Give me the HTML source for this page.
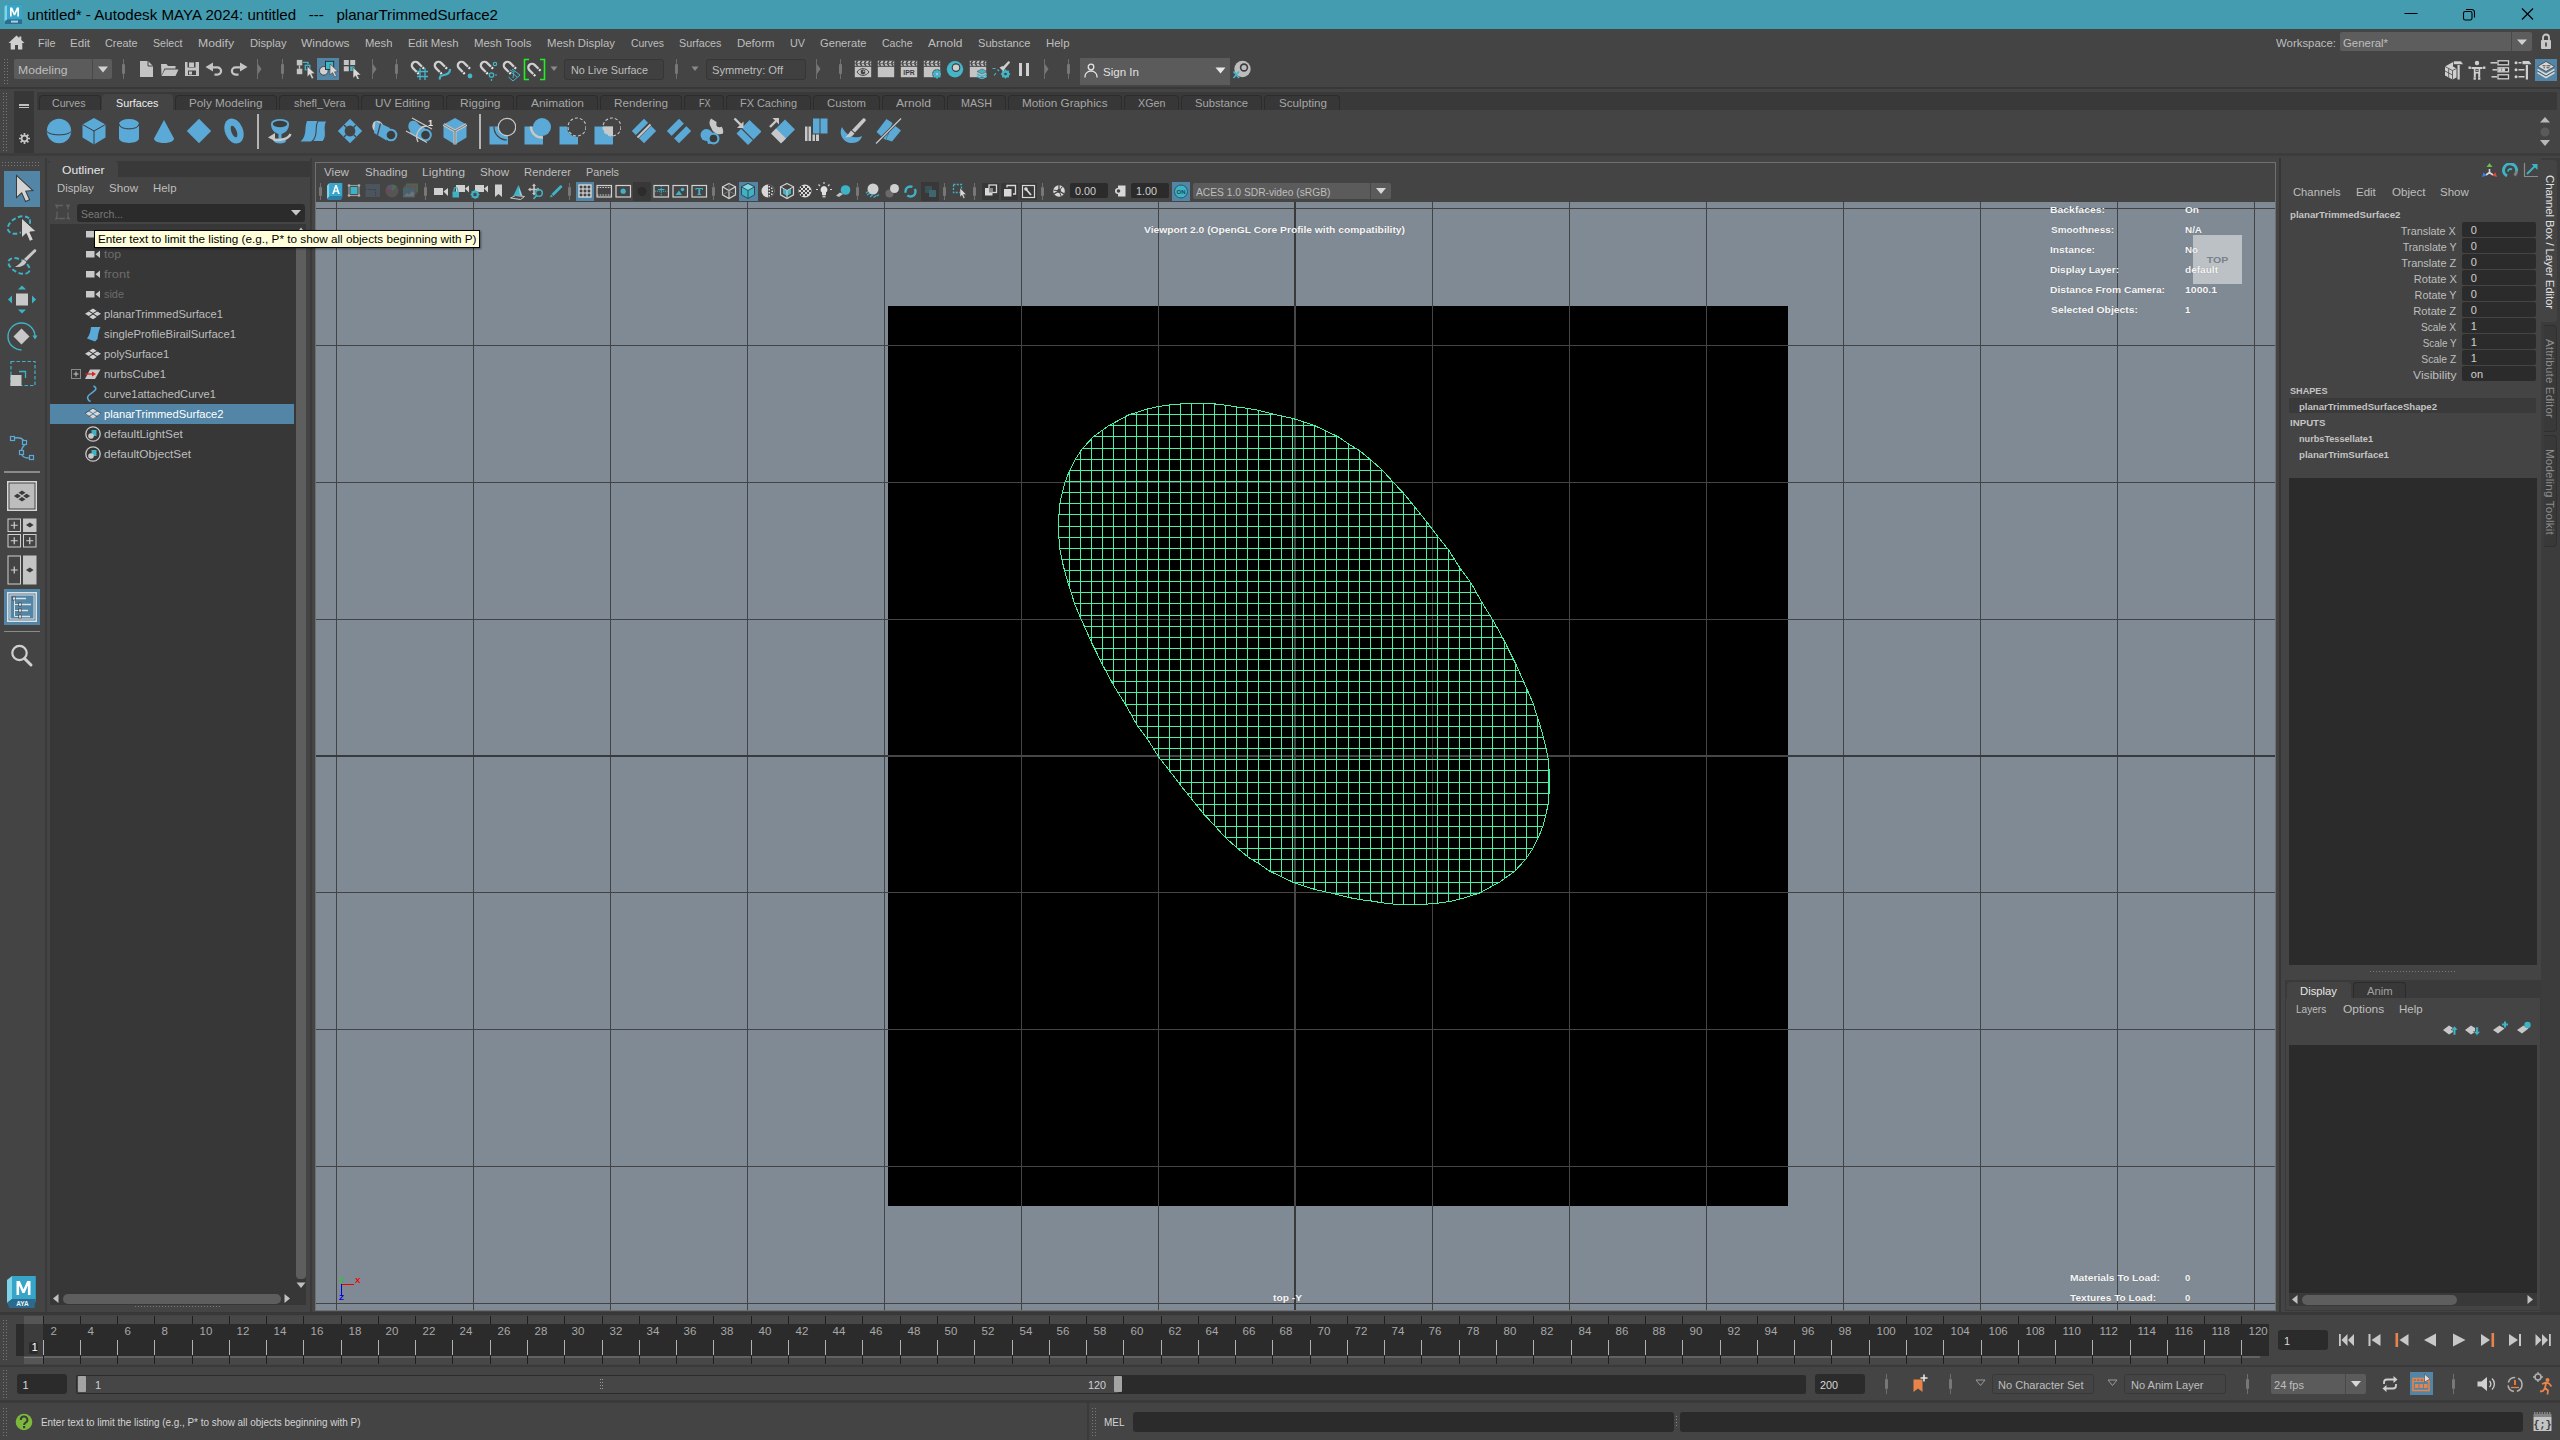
<!DOCTYPE html>
<html><head><meta charset="utf-8"><title>Maya</title>
<style>
html,body{margin:0;padding:0;}
body{width:2560px;height:1440px;background:#444444;overflow:hidden;position:relative;font-family:"Liberation Sans",sans-serif;}
div,svg{position:absolute;box-sizing:border-box;}
.t{white-space:pre;}
</style></head><body>
<div style="left:0px;top:0px;width:2560px;height:29px;background:#449cb1;"></div>
<svg style="left:4px;top:4px;" width="20" height="21" viewBox="0 0 20 21"><path d="M2 2 L5 0.5 L18 0.5 L18 17 L15.5 20 L2 20 Z" fill="#2f7fa8"/>
<path d="M0.5 2.5 L3.5 0.5 L3.5 15.5 L0.5 17.5Z" fill="#7fd3e8"/>
<rect x="3" y="0.5" width="15" height="15" fill="#37a5c8"/>
<path d="M3.5 15.5 L18 15.5 L18 20 L1 20 L1 17 Z" fill="#2a6d92"/>
<path d="M6 12.5V3.5h2.2l2.3 5.2 2.3-5.2H15v9h-1.7V6.6l-2.1 4.7h-1.4L7.7 6.6v5.9z" fill="#fff"/>
<rect x="7" y="16.6" width="7" height="2" fill="#cfe6ee" opacity=".8"/></svg>
<div class="t" style="left:27.00px;top:7.30px;font-size:15px;line-height:15px;color:#000;transform:scaleX(1.0076);transform-origin:0 0;">untitled* - Autodesk MAYA 2024: untitled   ---   planarTrimmedSurface2</div>
<svg style="left:2400px;top:4px;" width="150" height="22" viewBox="0 0 150 22"><path d="M4.5 9.5H17.5" stroke="#000" stroke-width="1" fill="none"/>
<g transform="translate(-1 0)"><rect x="64.500" y="7.500" width="8.500" height="8.500" rx="1.800" fill="none" stroke="#000" stroke-width="1.100"/><path d="M67 5.500H72.500a3 3 0 0 1 3 3V13.500" fill="none" stroke="#000" stroke-width="1.100"/></g>
<path d="M122 4.500L133 15.500M133 4.500L122 15.500" stroke="#000" stroke-width="1.2" fill="none"/></svg>
<svg style="left:8px;top:35px;" width="17" height="15" viewBox="0 0 17 15"><path d="M8.500 0.500L0.500 8h2.200v6.500h4.300v-4.500h3v4.500h4.300V8h2.200L13.300 4.900V1.500h-2v1.500z" fill="#d0d0d0"/></svg>
<div class="t" style="left:37.50px;top:37.99px;font-size:11px;line-height:11px;color:#bebebe;transform:scaleX(0.9874);transform-origin:0 0;">File</div>
<div class="t" style="left:70.00px;top:37.99px;font-size:11px;line-height:11px;color:#bebebe;transform:scaleX(1.0551);transform-origin:0 0;">Edit</div>
<div class="t" style="left:105.00px;top:37.99px;font-size:11px;line-height:11px;color:#bebebe;transform:scaleX(0.9844);transform-origin:0 0;">Create</div>
<div class="t" style="left:153.00px;top:37.99px;font-size:11px;line-height:11px;color:#bebebe;transform:scaleX(0.9649);transform-origin:0 0;">Select</div>
<div class="t" style="left:198.00px;top:37.99px;font-size:11px;line-height:11px;color:#bebebe;transform:scaleX(1.1112);transform-origin:0 0;">Modify</div>
<div class="t" style="left:249.50px;top:37.99px;font-size:11px;line-height:11px;color:#bebebe;transform:scaleX(1.0121);transform-origin:0 0;">Display</div>
<div class="t" style="left:301.00px;top:37.99px;font-size:11px;line-height:11px;color:#bebebe;transform:scaleX(1.0869);transform-origin:0 0;">Windows</div>
<div class="t" style="left:365.00px;top:37.99px;font-size:11px;line-height:11px;color:#bebebe;transform:scaleX(1.0224);transform-origin:0 0;">Mesh</div>
<div class="t" style="left:408.00px;top:37.99px;font-size:11px;line-height:11px;color:#bebebe;transform:scaleX(1.0325);transform-origin:0 0;">Edit Mesh</div>
<div class="t" style="left:474.00px;top:37.99px;font-size:11px;line-height:11px;color:#bebebe;transform:scaleX(1.0373);transform-origin:0 0;">Mesh Tools</div>
<div class="t" style="left:547.00px;top:37.99px;font-size:11px;line-height:11px;color:#bebebe;transform:scaleX(1.0300);transform-origin:0 0;">Mesh Display</div>
<div class="t" style="left:630.50px;top:37.99px;font-size:11px;line-height:11px;color:#bebebe;transform:scaleX(0.9471);transform-origin:0 0;">Curves</div>
<div class="t" style="left:679.00px;top:37.99px;font-size:11px;line-height:11px;color:#bebebe;transform:scaleX(0.9790);transform-origin:0 0;">Surfaces</div>
<div class="t" style="left:737.00px;top:37.99px;font-size:11px;line-height:11px;color:#bebebe;transform:scaleX(1.0399);transform-origin:0 0;">Deform</div>
<div class="t" style="left:790.00px;top:37.99px;font-size:11px;line-height:11px;color:#bebebe;transform:scaleX(0.9816);transform-origin:0 0;">UV</div>
<div class="t" style="left:820.00px;top:37.99px;font-size:11px;line-height:11px;color:#bebebe;transform:scaleX(1.0139);transform-origin:0 0;">Generate</div>
<div class="t" style="left:882.00px;top:37.99px;font-size:11px;line-height:11px;color:#bebebe;transform:scaleX(0.9593);transform-origin:0 0;">Cache</div>
<div class="t" style="left:928.00px;top:37.99px;font-size:11px;line-height:11px;color:#bebebe;transform:scaleX(1.0850);transform-origin:0 0;">Arnold</div>
<div class="t" style="left:978.00px;top:37.99px;font-size:11px;line-height:11px;color:#bebebe;transform:scaleX(1.0100);transform-origin:0 0;">Substance</div>
<div class="t" style="left:1046.00px;top:37.99px;font-size:11px;line-height:11px;color:#bebebe;transform:scaleX(1.0389);transform-origin:0 0;">Help</div>
<div class="t" style="left:2276.00px;top:37.99px;font-size:11px;line-height:11px;color:#bebebe;transform:scaleX(1.0368);transform-origin:0 0;">Workspace:</div>
<div style="left:2340px;top:32px;width:192px;height:19px;background:#5d5d5d;border-radius:2px;"></div>
<div style="left:2511px;top:32px;width:1px;height:19px;background:#4a4a4a;"></div>
<div class="t" style="left:2343.00px;top:37.99px;font-size:11px;line-height:11px;color:#bebebe;transform:scaleX(1.0365);transform-origin:0 0;">General*</div>
<svg style="left:2516px;top:38px;" width="12" height="8" viewBox="0 0 12 8"><path d="M1 1.500h10L6 7z" fill="#d0d0d0"/></svg>
<svg style="left:2540px;top:33px;" width="12" height="17" viewBox="0 0 12 17"><path d="M3 7V4.500a3 3 0 0 1 6 0V7" fill="none" stroke="#c8c8c8" stroke-width="1.800"/><rect x="1" y="7" width="10" height="9" rx="1" fill="#c8c8c8"/><rect x="5.200" y="9.500" width="1.600" height="4" fill="#444"/></svg>
<div style="left:0px;top:87px;width:2560px;height:2px;background:#383838;"></div>
<svg style="left:4px;top:59px;" width="5" height="25" viewBox="0 0 5 25"><rect x="0" y="0" width="1" height="1" fill="#777"/><rect x="3" y="0" width="1" height="1" fill="#777"/><rect x="0" y="3" width="1" height="1" fill="#777"/><rect x="3" y="3" width="1" height="1" fill="#777"/><rect x="0" y="6" width="1" height="1" fill="#777"/><rect x="3" y="6" width="1" height="1" fill="#777"/><rect x="0" y="9" width="1" height="1" fill="#777"/><rect x="3" y="9" width="1" height="1" fill="#777"/><rect x="0" y="12" width="1" height="1" fill="#777"/><rect x="3" y="12" width="1" height="1" fill="#777"/><rect x="0" y="15" width="1" height="1" fill="#777"/><rect x="3" y="15" width="1" height="1" fill="#777"/><rect x="0" y="18" width="1" height="1" fill="#777"/><rect x="3" y="18" width="1" height="1" fill="#777"/><rect x="0" y="21" width="1" height="1" fill="#777"/><rect x="3" y="21" width="1" height="1" fill="#777"/><rect x="0" y="24" width="1" height="1" fill="#777"/><rect x="3" y="24" width="1" height="1" fill="#777"/></svg>
<div style="left:14px;top:59px;width:98px;height:20px;background:#5b5b5b;border-radius:2px;"></div>
<div style="left:92px;top:59px;width:1px;height:20px;background:#484848;"></div>
<div class="t" style="left:17.50px;top:64.57px;font-size:11.5px;line-height:11.5px;color:#bebebe;transform:scaleX(1.0606);transform-origin:0 0;">Modeling</div>
<svg style="left:97px;top:65px;" width="12" height="9" viewBox="0 0 12 9"><path d="M1 1.500h10L6 7.500z" fill="#d0d0d0"/></svg>
<div style="left:123px;top:59px;width:1px;height:20px;background:#6e6e6e;"></div>
<div style="left:122px;top:64px;width:3px;height:10px;background:#777;border-radius:1px;"></div>
<svg style="left:257px;top:59px;" width="6" height="20" viewBox="0 0 6 20"><path d="M0.500 0V20" stroke="#6e6e6e" fill="none"/><path d="M1 5 L4.500 10 L1 15z" fill="#777"/></svg>
<div style="left:282px;top:59px;width:1px;height:20px;background:#6e6e6e;"></div>
<div style="left:281px;top:64px;width:3px;height:10px;background:#777;border-radius:1px;"></div>
<svg style="left:372px;top:59px;" width="6" height="20" viewBox="0 0 6 20"><path d="M0.500 0V20" stroke="#6e6e6e" fill="none"/><path d="M1 5 L4.500 10 L1 15z" fill="#777"/></svg>
<div style="left:396px;top:59px;width:1px;height:20px;background:#6e6e6e;"></div>
<div style="left:395px;top:64px;width:3px;height:10px;background:#777;border-radius:1px;"></div>
<svg style="left:139px;top:60px;" width="15" height="18" viewBox="0 0 15 18"><path d="M1 1h8l5 5v11H1z" fill="#c4c4c4"/><path d="M9 1v5h5" fill="none" stroke="#444" stroke-width="1"/></svg>
<svg style="left:160px;top:62px;" width="19" height="15" viewBox="0 0 19 15"><path d="M1 2h5.500l1.500 2h7.500v2.500H4.500L1.500 13.500z" fill="#c4c4c4"/><path d="M5 7.500h13.500l-3 6.500H1.500z" fill="#c4c4c4"/></svg>
<svg style="left:184px;top:61px;" width="16" height="16" viewBox="0 0 16 16"><path d="M1 1h14v14H1z" fill="#c4c4c4"/><rect x="3.500" y="1" width="8" height="5.500" fill="#444"/><rect x="5" y="1.500" width="5" height="4.500" fill="#c4c4c4"/><rect x="4" y="9.500" width="8" height="4.500" fill="#444"/><rect x="5" y="10.500" width="3" height="3" fill="#c4c4c4"/></svg>
<svg style="left:205px;top:62px;" width="19" height="14" viewBox="0 0 19 14"><path d="M8 0.500L0.500 5L8 9.500V6.500h4.500a2.500 2.500 0 0 1 0 5H9.500v2.200h3a4.700 4.700 0 0 0 0-9.400H8z" fill="#c4c4c4"/></svg>
<svg style="left:229px;top:62px;" width="19" height="14" viewBox="0 0 19 14"><path d="M11 0.500L18.500 5L11 9.500V6.500H6.500a2.500 2.500 0 0 0 0 5H9.500v2.200h-3a4.700 4.700 0 0 1 0-9.400H11z" fill="#c4c4c4"/></svg>
<svg style="left:295px;top:59px;" width="20" height="20" viewBox="0 0 20 20"><rect x="1.800" y=".9" width="5.500" height="5.500" fill="#c4c4c4"/><rect x="1.800" y="9.700" width="5.500" height="5.500" fill="#c4c4c4"/><path d="M4.500 6.400v3.300" stroke="#c4c4c4" stroke-width="1.400"/><path d="M8 3.400h5v1.800" stroke="#45b5c9" fill="none" stroke-width="1.300"/><rect x="10.300" y="6.300" width="4.500" height="4.500" fill="none" stroke="#45b5c9" stroke-width="1.300"/><path d="M12.2 7l0 11 2.600-2.400 2 4.400 1.900-.9-2-4.300 3.500-.2z" fill="#d8d8d8" stroke="#444" stroke-width=".6"/></svg>
<div style="left:317px;top:58px;width:22px;height:22px;background:#5285a6;"></div>
<svg style="left:318px;top:59px;" width="20" height="20" viewBox="0 0 20 20"><circle cx="5.800" cy="11.800" r="4.300" fill="#d0d0d0" stroke="#333" stroke-width=".8"/><rect x="7.500" y="2.300" width="8.200" height="8.200" fill="#3cb6c9" stroke="#2a2a2a" stroke-width=".9"/><path d="M12 5l0 11 2.600-2.400 2 4.400 1.900-.9-2-4.300 3.500-.2z" fill="#d8d8d8" stroke="#444" stroke-width=".6"/></svg>
<svg style="left:342px;top:59px;" width="20" height="20" viewBox="0 0 20 20"><rect x="1.800" y="1" width="5" height="5" fill="#c4c4c4"/><rect x="8.200" y="1" width="5" height="5" fill="#c4c4c4"/><rect x="1.800" y="7.300" width="5" height="5" fill="#c4c4c4"/><rect x="8.200" y="7.300" width="4.300" height="4.700" fill="#45b5c9"/><path d="M11 8.3l0 11 2.600-2.400 2 4.400 1.900-.9-2-4.300 3.500-.2z" fill="#d8d8d8" stroke="#444" stroke-width=".6"/></svg>
<svg style="left:410px;top:60px;" width="22" height="22" viewBox="0 0 22 22"><g transform="translate(5.500 5.500) rotate(-45)"><path d="M-3.700 5.500V0A3.700 3.700 0 0 1 3.700 0V5.500" fill="none" stroke="#cfcfcf" stroke-width="2.300"/><rect x="-4.850" y="6.400" width="2.300" height="1.900" fill="#e8e8e8"/><rect x="2.550" y="6.400" width="2.300" height="1.900" fill="#e8e8e8"/></g><path d="M7 11.500h11M7 16.500h11M10 8v12M15 8v12" stroke="#45b5c9" stroke-width="1.300" fill="none"/></svg>
<svg style="left:433px;top:60px;" width="22" height="22" viewBox="0 0 22 22"><g transform="translate(5.500 5.500) rotate(-45)"><path d="M-3.700 5.500V0A3.700 3.700 0 0 1 3.700 0V5.500" fill="none" stroke="#cfcfcf" stroke-width="2.300"/><rect x="-4.850" y="6.400" width="2.300" height="1.900" fill="#e8e8e8"/><rect x="2.550" y="6.400" width="2.300" height="1.900" fill="#e8e8e8"/></g><path d="M7 19.500c-1-3 1-4 4-4.500 4-.5 6-2 6-6" stroke="#45b5c9" stroke-width="2.200" fill="none"/></svg>
<svg style="left:456px;top:60px;" width="22" height="22" viewBox="0 0 22 22"><g transform="translate(5.500 5.500) rotate(-45)"><path d="M-3.700 5.500V0A3.700 3.700 0 0 1 3.700 0V5.500" fill="none" stroke="#cfcfcf" stroke-width="2.300"/><rect x="-4.850" y="6.400" width="2.300" height="1.900" fill="#e8e8e8"/><rect x="2.550" y="6.400" width="2.300" height="1.900" fill="#e8e8e8"/></g><circle cx="14" cy="16" r="2.400" fill="#45b5c9"/></svg>
<svg style="left:479px;top:60px;" width="22" height="22" viewBox="0 0 22 22"><g transform="translate(5.500 5.500) rotate(-45)"><path d="M-3.700 5.500V0A3.700 3.700 0 0 1 3.700 0V5.500" fill="none" stroke="#cfcfcf" stroke-width="2.300"/><rect x="-4.850" y="6.400" width="2.300" height="1.900" fill="#e8e8e8"/><rect x="2.550" y="6.400" width="2.300" height="1.900" fill="#e8e8e8"/></g><circle cx="12.500" cy="15" r="2.200" fill="none" stroke="#45b5c9" stroke-width="1.300"/><circle cx="16" cy="4" r="1.700" fill="none" stroke="#45b5c9" stroke-width="1.200"/><path d="M16 15h2M12.500 19v2" stroke="#45b5c9" stroke-width="1.200"/></svg>
<svg style="left:502px;top:60px;" width="22" height="22" viewBox="0 0 22 22"><g transform="translate(5.500 5.500) rotate(-45)"><path d="M-3.700 5.500V0A3.700 3.700 0 0 1 3.700 0V5.500" fill="none" stroke="#cfcfcf" stroke-width="2.300"/><rect x="-4.850" y="6.400" width="2.300" height="1.900" fill="#e8e8e8"/><rect x="2.550" y="6.400" width="2.300" height="1.900" fill="#e8e8e8"/></g><path d="M10 9l8 6-7 6-4.500-4" fill="none" stroke="#45b5c9" stroke-width="1"/><path d="M9 12l6 5M12 11l-1 7M8 10l3 1.500" stroke="#45b5c9" stroke-width="1"/></svg>
<svg style="left:523px;top:58px;" width="23" height="23" viewBox="0 0 23 23"><path d="M6 1.500H1.500v20H6M17 1.500h4.500v20H17" fill="none" stroke="#22ee22" stroke-width="1.600"/><g transform="translate(3.500,4)"><g transform="translate(5.500 5.500) rotate(-45)"><path d="M-3.700 5.500V0A3.700 3.700 0 0 1 3.700 0V5.500" fill="none" stroke="#cfcfcf" stroke-width="2.300"/><rect x="-4.850" y="6.400" width="2.300" height="1.900" fill="#e8e8e8"/><rect x="2.550" y="6.400" width="2.300" height="1.900" fill="#e8e8e8"/></g></g></svg>
<svg style="left:550px;top:66px;" width="8" height="6" viewBox="0 0 8 6"><path d="M0.500 0.500h7l-3.500 4.500z" fill="#8a8a8a"/></svg>
<div style="left:564px;top:59px;width:100px;height:21px;background:#404040;border:1px solid #363636;border-radius:3px;"></div>
<div class="t" style="left:571.00px;top:64.99px;font-size:11px;line-height:11px;color:#bebebe;transform:scaleX(0.9839);transform-origin:0 0;">No Live Surface</div>
<div style="left:676px;top:59px;width:1px;height:20px;background:#6e6e6e;"></div>
<div style="left:675px;top:64px;width:3px;height:10px;background:#777;border-radius:1px;"></div>
<svg style="left:691px;top:66px;" width="8" height="6" viewBox="0 0 8 6"><path d="M0.500 0.500h7l-3.500 4.500z" fill="#8a8a8a"/></svg>
<div style="left:706px;top:59px;width:100px;height:21px;background:#404040;border:1px solid #363636;border-radius:3px;"></div>
<div class="t" style="left:712.00px;top:64.99px;font-size:11px;line-height:11px;color:#bebebe;transform:scaleX(1.0130);transform-origin:0 0;">Symmetry: Off</div>
<svg style="left:816px;top:59px;" width="6" height="20" viewBox="0 0 6 20"><path d="M0.500 0V20" stroke="#6e6e6e" fill="none"/><path d="M1 5 L4.500 10 L1 15z" fill="#777"/></svg>
<div style="left:840px;top:59px;width:1px;height:20px;background:#6e6e6e;"></div>
<div style="left:839px;top:64px;width:3px;height:10px;background:#777;border-radius:1px;"></div>
<svg style="left:853px;top:60px;" width="19" height="19" viewBox="0 0 19 19"><rect x="1.800" y="6.800" width="16.400" height="10.400" fill="#c4c4c4"/><rect x="1.800" y=".8" width="16.400" height="2.200" fill="#c4c4c4"/><rect x="1.800" y="3.600" width="16.400" height="2.200" fill="#c4c4c4"/><path d="M4.7 .8l-1.800 2.200M2.9 3.600l1.800 2.200" stroke="#444" stroke-width="1.500"/><path d="M8.9 .8l-1.800 2.200M7.1 3.600l1.800 2.200" stroke="#444" stroke-width="1.500"/><path d="M13.1 .8l-1.800 2.200M11.3 3.600l1.800 2.200" stroke="#444" stroke-width="1.500"/><path d="M17.3 .8l-1.800 2.200M15.5 3.600l1.800 2.200" stroke="#444" stroke-width="1.500"/><path d="M4 12c3-4.500 9-4.500 12 0-3 4.500-9 4.500-12 0z" fill="none" stroke="#444" stroke-width="1"/><circle cx="10" cy="12" r="2.400" fill="#444"/><circle cx="10.800" cy="11.200" r=".8" fill="#c4c4c4"/></svg>
<svg style="left:876px;top:60px;" width="19" height="19" viewBox="0 0 19 19"><rect x="1.800" y="6.800" width="16.400" height="10.400" fill="#c4c4c4"/><rect x="1.800" y=".8" width="16.400" height="2.200" fill="#c4c4c4"/><rect x="1.800" y="3.600" width="16.400" height="2.200" fill="#c4c4c4"/><path d="M4.7 .8l-1.800 2.200M2.9 3.600l1.800 2.200" stroke="#444" stroke-width="1.500"/><path d="M8.9 .8l-1.800 2.200M7.1 3.600l1.800 2.200" stroke="#444" stroke-width="1.500"/><path d="M13.1 .8l-1.800 2.200M11.3 3.600l1.800 2.200" stroke="#444" stroke-width="1.500"/><path d="M17.3 .8l-1.800 2.200M15.5 3.600l1.800 2.200" stroke="#444" stroke-width="1.500"/></svg>
<svg style="left:899px;top:60px;" width="19" height="19" viewBox="0 0 19 19"><rect x="1.800" y="6.800" width="16.400" height="10.400" fill="#c4c4c4"/><rect x="1.800" y=".8" width="16.400" height="2.200" fill="#c4c4c4"/><rect x="1.800" y="3.600" width="16.400" height="2.200" fill="#c4c4c4"/><path d="M4.7 .8l-1.800 2.200M2.9 3.600l1.800 2.200" stroke="#444" stroke-width="1.500"/><path d="M8.9 .8l-1.800 2.200M7.1 3.600l1.800 2.200" stroke="#444" stroke-width="1.500"/><path d="M13.1 .8l-1.800 2.200M11.3 3.600l1.800 2.200" stroke="#444" stroke-width="1.500"/><path d="M17.3 .8l-1.800 2.200M15.5 3.600l1.800 2.200" stroke="#444" stroke-width="1.500"/><text x="10" y="15.300" font-size="7.500" font-weight="bold" text-anchor="middle" fill="#3a3a3a" font-family="Liberation Sans" textLength="11.500" lengthAdjust="spacingAndGlyphs">IPR</text></svg>
<svg style="left:922px;top:60px;" width="19" height="19" viewBox="0 0 19 19"><rect x="1.800" y="6.800" width="16.400" height="10.400" fill="#c4c4c4"/><rect x="1.800" y=".8" width="16.400" height="2.200" fill="#c4c4c4"/><rect x="1.800" y="3.600" width="16.400" height="2.200" fill="#c4c4c4"/><path d="M4.7 .8l-1.800 2.200M2.9 3.600l1.800 2.200" stroke="#444" stroke-width="1.500"/><path d="M8.9 .8l-1.800 2.200M7.1 3.600l1.800 2.200" stroke="#444" stroke-width="1.500"/><path d="M13.1 .8l-1.800 2.200M11.3 3.600l1.800 2.200" stroke="#444" stroke-width="1.500"/><path d="M17.3 .8l-1.800 2.200M15.5 3.600l1.800 2.200" stroke="#444" stroke-width="1.500"/><circle cx="15" cy="14" r="4.800" fill="#444"/><circle cx="15" cy="14" r="3" fill="none" stroke="#45b5c9" stroke-width="1.700"/><path d="M15 9.300v9.400M10.300 14h9.400M11.700 10.700l6.600 6.600M18.300 10.700l-6.600 6.600" stroke="#45b5c9" stroke-width="1.300"/><circle cx="15" cy="14" r="2.300" fill="#45b5c9"/><circle cx="15" cy="14" r="1.100" fill="#c4c4c4"/></svg>
<svg style="left:945px;top:60px;" width="20" height="20" viewBox="0 0 20 20"><circle cx="10" cy="9.200" r="8.200" fill="#45b5c9"/><circle cx="11" cy="7.600" r="4.300" fill="#3c3c3c"/><circle cx="11" cy="7.600" r="3.200" fill="#cfcfcf"/></svg>
<svg style="left:968px;top:60px;" width="19" height="19" viewBox="0 0 19 19"><rect x="1.800" y="6.800" width="16.400" height="10.400" fill="#c4c4c4"/><rect x="1.800" y=".8" width="16.400" height="2.200" fill="#c4c4c4"/><rect x="1.800" y="3.600" width="16.400" height="2.200" fill="#c4c4c4"/><path d="M4.7 .8l-1.800 2.200M2.9 3.600l1.800 2.200" stroke="#444" stroke-width="1.500"/><path d="M8.9 .8l-1.800 2.200M7.1 3.600l1.800 2.200" stroke="#444" stroke-width="1.500"/><path d="M13.1 .8l-1.800 2.200M11.3 3.600l1.800 2.200" stroke="#444" stroke-width="1.500"/><path d="M17.3 .8l-1.800 2.200M15.5 3.600l1.800 2.200" stroke="#444" stroke-width="1.500"/><path d="M9 11.500l5-2.500 5 2.500-5 2.500z" fill="#45b5c9" stroke="#444" stroke-width=".5"/><path d="M9 14l5 2.500 5-2.500M9 16.300l5 2.500 5-2.500" fill="none" stroke="#45b5c9" stroke-width="1.400"/></svg>
<svg style="left:991px;top:60px;" width="21" height="20" viewBox="0 0 21 20"><path d="M17 1.500c1-.8 2.500.5 1.700 1.500L13.500 9 11.500 7.200z" fill="#cfcfcf"/><path d="M8.500 7.500l3-1.500 2.500 2.500-1.500 3z" fill="#cfcfcf"/><path d="M1.500 8.500h3M3 15.500l2-2.500M6.500 9.500l1.500 1.500" stroke="#45b5c9" stroke-width="1.200"/><circle cx="14.500" cy="14" r="3" fill="none" stroke="#45b5c9" stroke-width="1.700"/><path d="M14.500 9.400v9.200M9.900 14h9.200M11.300 10.800l6.400 6.400M17.700 10.800l-6.400 6.400" stroke="#45b5c9" stroke-width="1.300"/><circle cx="14.500" cy="14" r="2.300" fill="#45b5c9"/><circle cx="14.500" cy="14" r="1.300" fill="#444"/></svg>
<div style="left:1018.5px;top:63px;width:3.5px;height:12.5px;background:#cfcfcf;"></div>
<div style="left:1025.5px;top:63px;width:3.5px;height:12.5px;background:#cfcfcf;"></div>
<svg style="left:1044px;top:59px;" width="6" height="20" viewBox="0 0 6 20"><path d="M0.500 0V20" stroke="#6e6e6e" fill="none"/><path d="M1 5 L4.500 10 L1 15z" fill="#777"/></svg>
<div style="left:1068px;top:59px;width:1px;height:20px;background:#6e6e6e;"></div>
<div style="left:1067px;top:64px;width:3px;height:10px;background:#777;border-radius:1px;"></div>
<div style="left:1080px;top:58px;width:150px;height:27px;background:#5b5b5b;"></div>
<svg style="left:1084px;top:63px;" width="14" height="15" viewBox="0 0 14 15"><circle cx="7" cy="4" r="2.800" fill="none" stroke="#e4e4e4" stroke-width="1.300"/><path d="M1 14.500v-1a6 5.500 0 0 1 12 0v1" fill="none" stroke="#e4e4e4" stroke-width="1.300"/></svg>
<div class="t" style="left:1103.20px;top:66.57px;font-size:11.5px;line-height:11.5px;color:#e0e0e0;transform:scaleX(1.0055);transform-origin:0 0;">Sign In</div>
<svg style="left:1215px;top:67px;" width="11" height="7" viewBox="0 0 11 7"><path d="M.5 .5h10L5.500 6.500z" fill="#e8e8e8"/></svg>
<svg style="left:1232px;top:60px;" width="20" height="20" viewBox="0 0 20 20"><circle cx="10.500" cy="9" r="8.200" fill="#bcbcbc"/><circle cx="12" cy="7.500" r="4.200" fill="#3c3c3c"/><circle cx="12" cy="7.500" r="2.600" fill="#bcbcbc"/><path d="M1.500 11.500l5.500 6.500M7 11.500l-5.500 6.500" stroke="#45b5c9" stroke-width="1.600"/></svg>
<svg style="left:2444px;top:60px;" width="20" height="20" viewBox="0 0 20 20"><path d="M1 6.500L9 2v4.500L12.500 8.500V17.500L8.500 19.500L1 15.500z" fill="#d0d0d0"/><path d="M1 6.500L8.500 10.500 12.500 8.500M8.500 10.500v9" stroke="#444" stroke-width=".8" fill="none"/><path d="M1 11L8.500 15M4.700 8.500v9" stroke="#444" stroke-width=".8"/><path d="M9.500 1h7.500l2.500 3.500H9.500z" fill="#d0d0d0" stroke="#444" stroke-width=".6"/><rect x="13.500" y="5" width="2.200" height="14.500" fill="#d0d0d0"/></svg>
<svg style="left:2468px;top:60px;" width="18" height="20" viewBox="0 0 18 20"><circle cx="9" cy="3" r="2.200" fill="#d0d0d0"/><path d="M3.500 8h11" stroke="#d0d0d0" stroke-width="2"/><rect x=".5" y="6.500" width="2.400" height="2.400" fill="#d0d0d0"/><rect x="15" y="6.500" width="2.400" height="2.400" fill="#d0d0d0"/><rect x="5.800" y="7" width="6.400" height="6.500" fill="#d0d0d0"/><rect x="7.500" y="9" width="3" height="3" fill="#444"/><rect x="8.300" y="9.800" width="1.400" height="1.400" fill="#d0d0d0"/><path d="M6.800 13v4.500M11.200 13v4.500" stroke="#d0d0d0" stroke-width="2"/><rect x="5.500" y="17.500" width="2.400" height="2.200" fill="#d0d0d0"/><rect x="10" y="17.500" width="2.400" height="2.200" fill="#d0d0d0"/></svg>
<svg style="left:2490px;top:60px;" width="20" height="20" viewBox="0 0 20 20"><path d="M0.5 2.8h6.5" stroke="#d0d0d0" stroke-width="1.500"/><rect x="8" y="0.8" width="10.500" height="4" fill="#333" stroke="#d0d0d0" stroke-width="1.300"/><path d="M2.5 9.8h4.5" stroke="#d0d0d0" stroke-width="1.500"/><rect x="8" y="7.8" width="10.500" height="4" fill="#333" stroke="#d0d0d0" stroke-width="1.300"/><path d="M1.5 16.8h5.5" stroke="#d0d0d0" stroke-width="1.500"/><rect x="8" y="14.8" width="10.500" height="4" fill="#333" stroke="#d0d0d0" stroke-width="1.300"/><rect x="8.500" y="8.300" width="3" height="3" fill="#d0d0d0"/><circle cx="13.500" cy="9.800" r="1.800" fill="#d0d0d0"/></svg>
<svg style="left:2514px;top:60px;" width="19" height="20" viewBox="0 0 19 20"><circle cx="2" cy="2.8" r="1.500" fill="#d0d0d0"/><circle cx="2" cy="9.8" r="1.500" fill="#d0d0d0"/><circle cx="2" cy="16.8" r="1.500" fill="#d0d0d0"/><path d="M4.500 2.800h3M4.500 9.800h6M4.500 16.800h6" stroke="#d0d0d0" stroke-width="1.400"/><path d="M8.500 1h6.500l2.500 3.300H8.500z" fill="#d0d0d0"/><rect x="11.800" y="5" width="2.200" height="14.500" fill="#d0d0d0"/></svg>
<div style="left:2535px;top:59px;width:22px;height:22px;background:#5285a6;"></div>
<svg style="left:2536px;top:60px;" width="20" height="20" viewBox="0 0 20 20"><path d="M10 1.500l8.500 5-8.500 5-8.500-5z" fill="#d8d8d8" stroke="#333" stroke-width=".7"/><path d="M6.500 5.800h3M10.500 5.800h4M7.500 7.800h1.500M10.500 7.800h3" stroke="#333" stroke-width=".9"/><path d="M1.500 9.500l8.500 5 8.500-5M1.500 12.500l8.500 5 8.500-5" fill="none" stroke="#d8d8d8" stroke-width="1.600"/><path d="M1.500 11l8.500 5 8.500-5" fill="none" stroke="#333" stroke-width=".5"/></svg>
<svg style="left:3px;top:93px;" width="5" height="60" viewBox="0 0 5 60"><rect x="0" y="0" width="1" height="1" fill="#777"/><rect x="3" y="0" width="1" height="1" fill="#777"/><rect x="0" y="3" width="1" height="1" fill="#777"/><rect x="3" y="3" width="1" height="1" fill="#777"/><rect x="0" y="6" width="1" height="1" fill="#777"/><rect x="3" y="6" width="1" height="1" fill="#777"/><rect x="0" y="9" width="1" height="1" fill="#777"/><rect x="3" y="9" width="1" height="1" fill="#777"/><rect x="0" y="12" width="1" height="1" fill="#777"/><rect x="3" y="12" width="1" height="1" fill="#777"/><rect x="0" y="15" width="1" height="1" fill="#777"/><rect x="3" y="15" width="1" height="1" fill="#777"/><rect x="0" y="18" width="1" height="1" fill="#777"/><rect x="3" y="18" width="1" height="1" fill="#777"/><rect x="0" y="21" width="1" height="1" fill="#777"/><rect x="3" y="21" width="1" height="1" fill="#777"/><rect x="0" y="24" width="1" height="1" fill="#777"/><rect x="3" y="24" width="1" height="1" fill="#777"/><rect x="0" y="27" width="1" height="1" fill="#777"/><rect x="3" y="27" width="1" height="1" fill="#777"/><rect x="0" y="30" width="1" height="1" fill="#777"/><rect x="3" y="30" width="1" height="1" fill="#777"/><rect x="0" y="33" width="1" height="1" fill="#777"/><rect x="3" y="33" width="1" height="1" fill="#777"/><rect x="0" y="36" width="1" height="1" fill="#777"/><rect x="3" y="36" width="1" height="1" fill="#777"/><rect x="0" y="39" width="1" height="1" fill="#777"/><rect x="3" y="39" width="1" height="1" fill="#777"/><rect x="0" y="42" width="1" height="1" fill="#777"/><rect x="3" y="42" width="1" height="1" fill="#777"/><rect x="0" y="45" width="1" height="1" fill="#777"/><rect x="3" y="45" width="1" height="1" fill="#777"/><rect x="0" y="48" width="1" height="1" fill="#777"/><rect x="3" y="48" width="1" height="1" fill="#777"/><rect x="0" y="51" width="1" height="1" fill="#777"/><rect x="3" y="51" width="1" height="1" fill="#777"/><rect x="0" y="54" width="1" height="1" fill="#777"/><rect x="3" y="54" width="1" height="1" fill="#777"/><rect x="0" y="57" width="1" height="1" fill="#777"/><rect x="3" y="57" width="1" height="1" fill="#777"/></svg>
<div style="left:14px;top:91px;width:20px;height:62px;background:#373737;"></div>
<div style="left:19px;top:104px;width:10px;height:1.5px;background:#c0c0c0;"></div>
<div style="left:19px;top:106.5px;width:10px;height:1.5px;background:#c0c0c0;"></div>
<svg style="left:19px;top:133px;" width="11" height="11" viewBox="0 0 11 11"><path d="M5.500 0v11M0 5.500h11M1.600 1.600l7.800 7.800M9.400 1.600l-7.800 7.800" stroke="#c4c4c4" stroke-width="1.700"/><circle cx="5.500" cy="5.500" r="3.700" fill="#c4c4c4"/><circle cx="5.500" cy="5.500" r="2" fill="#373737"/></svg>
<div style="left:37px;top:92px;width:2520px;height:18px;background:#393939;"></div>
<div style="left:39px;top:95px;width:62px;height:15px;background:#373737;border:1px solid #2c2c2c;border-bottom:none;border-radius:4px 4px 0 0;"></div>
<div class="t" style="left:52.00px;top:97.99px;font-size:11px;line-height:11px;color:#a6a6a6;transform:scaleX(0.9615);transform-origin:0 0;">Curves</div>
<div style="left:102px;top:94px;width:71px;height:16px;background:#444444;border-radius:4px 4px 0 0;"></div>
<div class="t" style="left:116.00px;top:97.99px;font-size:11px;line-height:11px;color:#eeeeee;transform:scaleX(0.9790);transform-origin:0 0;">Surfaces</div>
<div style="left:175px;top:95px;width:102px;height:15px;background:#373737;border:1px solid #2c2c2c;border-bottom:none;border-radius:4px 4px 0 0;"></div>
<div class="t" style="left:189.00px;top:97.99px;font-size:11px;line-height:11px;color:#a6a6a6;transform:scaleX(1.0638);transform-origin:0 0;">Poly Modeling</div>
<div style="left:279px;top:95px;width:80px;height:15px;background:#373737;border:1px solid #2c2c2c;border-bottom:none;border-radius:4px 4px 0 0;"></div>
<div class="t" style="left:293.50px;top:97.99px;font-size:11px;line-height:11px;color:#a6a6a6;transform:scaleX(0.9908);transform-origin:0 0;">shefl_Vera</div>
<div style="left:361px;top:95px;width:83px;height:15px;background:#373737;border:1px solid #2c2c2c;border-bottom:none;border-radius:4px 4px 0 0;"></div>
<div class="t" style="left:375.00px;top:97.99px;font-size:11px;line-height:11px;color:#a6a6a6;transform:scaleX(1.0583);transform-origin:0 0;">UV Editing</div>
<div style="left:446px;top:95px;width:68px;height:15px;background:#373737;border:1px solid #2c2c2c;border-bottom:none;border-radius:4px 4px 0 0;"></div>
<div class="t" style="left:460.00px;top:97.99px;font-size:11px;line-height:11px;color:#a6a6a6;transform:scaleX(1.0858);transform-origin:0 0;">Rigging</div>
<div style="left:516px;top:95px;width:82px;height:15px;background:#373737;border:1px solid #2c2c2c;border-bottom:none;border-radius:4px 4px 0 0;"></div>
<div class="t" style="left:531.00px;top:97.99px;font-size:11px;line-height:11px;color:#a6a6a6;transform:scaleX(1.0835);transform-origin:0 0;">Animation</div>
<div style="left:600px;top:95px;width:82px;height:15px;background:#373737;border:1px solid #2c2c2c;border-bottom:none;border-radius:4px 4px 0 0;"></div>
<div class="t" style="left:614.00px;top:97.99px;font-size:11px;line-height:11px;color:#a6a6a6;transform:scaleX(1.0640);transform-origin:0 0;">Rendering</div>
<div style="left:684px;top:95px;width:40px;height:15px;background:#373737;border:1px solid #2c2c2c;border-bottom:none;border-radius:4px 4px 0 0;"></div>
<div class="t" style="left:698.50px;top:97.99px;font-size:11px;line-height:11px;color:#a6a6a6;transform:scaleX(0.8181);transform-origin:0 0;">FX</div>
<div style="left:726px;top:95px;width:85px;height:15px;background:#373737;border:1px solid #2c2c2c;border-bottom:none;border-radius:4px 4px 0 0;"></div>
<div class="t" style="left:740.00px;top:97.99px;font-size:11px;line-height:11px;color:#a6a6a6;transform:scaleX(0.9918);transform-origin:0 0;">FX Caching</div>
<div style="left:813px;top:95px;width:67px;height:15px;background:#373737;border:1px solid #2c2c2c;border-bottom:none;border-radius:4px 4px 0 0;"></div>
<div class="t" style="left:827.00px;top:97.99px;font-size:11px;line-height:11px;color:#a6a6a6;transform:scaleX(1.0291);transform-origin:0 0;">Custom</div>
<div style="left:882px;top:95px;width:63px;height:15px;background:#373737;border:1px solid #2c2c2c;border-bottom:none;border-radius:4px 4px 0 0;"></div>
<div class="t" style="left:896.00px;top:97.99px;font-size:11px;line-height:11px;color:#a6a6a6;transform:scaleX(1.1007);transform-origin:0 0;">Arnold</div>
<div style="left:947px;top:95px;width:59px;height:15px;background:#373737;border:1px solid #2c2c2c;border-bottom:none;border-radius:4px 4px 0 0;"></div>
<div class="t" style="left:961.00px;top:97.99px;font-size:11px;line-height:11px;color:#a6a6a6;transform:scaleX(0.9754);transform-origin:0 0;">MASH</div>
<div style="left:1008px;top:95px;width:114px;height:15px;background:#373737;border:1px solid #2c2c2c;border-bottom:none;border-radius:4px 4px 0 0;"></div>
<div class="t" style="left:1022.00px;top:97.99px;font-size:11px;line-height:11px;color:#a6a6a6;transform:scaleX(1.0676);transform-origin:0 0;">Motion Graphics</div>
<div style="left:1124px;top:95px;width:55px;height:15px;background:#373737;border:1px solid #2c2c2c;border-bottom:none;border-radius:4px 4px 0 0;"></div>
<div class="t" style="left:1137.50px;top:97.99px;font-size:11px;line-height:11px;color:#a6a6a6;transform:scaleX(0.9776);transform-origin:0 0;">XGen</div>
<div style="left:1181px;top:95px;width:81px;height:15px;background:#373737;border:1px solid #2c2c2c;border-bottom:none;border-radius:4px 4px 0 0;"></div>
<div class="t" style="left:1195.00px;top:97.99px;font-size:11px;line-height:11px;color:#a6a6a6;transform:scaleX(1.0196);transform-origin:0 0;">Substance</div>
<div style="left:1264px;top:95px;width:76px;height:15px;background:#373737;border:1px solid #2c2c2c;border-bottom:none;border-radius:4px 4px 0 0;"></div>
<div class="t" style="left:1278.50px;top:97.99px;font-size:11px;line-height:11px;color:#a6a6a6;transform:scaleX(1.0608);transform-origin:0 0;">Sculpting</div>
<div style="left:0px;top:153px;width:2560px;height:3px;background:#3c3c3c;"></div>
<svg style="left:2539px;top:116px;" width="12" height="34" viewBox="0 0 12 34"><path d="M1 6.500h10L6 1z" fill="#b8b8b8"/><circle cx="6" cy="16" r="4.500" fill="#5a5a5a"/><path d="M1 24h10L6 30z" fill="#b8b8b8"/></svg>
<div style="left:257px;top:114px;width:2px;height:35px;background:#b4b4b4;"></div>
<div style="left:479px;top:114px;width:2px;height:35px;background:#b4b4b4;"></div>
<svg style="left:45px;top:117px;" width="28" height="28" viewBox="0 0 28 28"><circle cx="14" cy="14" r="12.200" fill="#5aa9d6"/><path d="M2 14.500c3 4.500 21 4.500 24 0" fill="none" stroke="#3a3a3a" stroke-width="1"/></svg>
<svg style="left:79.5px;top:117px;" width="28" height="28" viewBox="0 0 28 28"><path d="M14 1L25.500 7.500V20.500L14 27.500L2.500 20.500V7.500z" fill="#5aa9d6"/><path d="M2.500 7.500L14 14L25.500 7.500M14 14V27.500" fill="none" stroke="#3a3a3a" stroke-width="1"/></svg>
<svg style="left:115px;top:117px;" width="28" height="28" viewBox="0 0 28 28"><path d="M4 7v14c0 6.500 20 6.500 20 0V7z" fill="#5aa9d6"/><ellipse cx="14" cy="7" rx="10" ry="5" fill="#5aa9d6"/><path d="M4 7c0 6.500 20 6.500 20 0" fill="none" stroke="#3a3a3a" stroke-width="1"/></svg>
<svg style="left:149.5px;top:117px;" width="28" height="28" viewBox="0 0 28 28"><path d="M14 3L4 21.500c0 6 20 6 20 0z" fill="#5aa9d6"/></svg>
<svg style="left:185px;top:117px;" width="28" height="28" viewBox="0 0 28 28"><path d="M14 1.700L26.200 14L14 26.300L1.800 14z" fill="#5aa9d6"/></svg>
<svg style="left:220px;top:117px;" width="28" height="28" viewBox="0 0 28 28"><ellipse cx="14" cy="14" rx="9" ry="13" transform="rotate(-22 14 14)" fill="#5aa9d6"/><ellipse cx="14" cy="14.500" rx="2.600" ry="6.200" transform="rotate(-22 14 14.500)" fill="#444"/></svg>
<svg style="left:266px;top:117px;" width="28" height="28" viewBox="0 0 28 28"><path d="M5 7c0 6 4 9 7.500 10v6h3v-6C19 16 23 13 23 7z" fill="#5aa9d6"/><ellipse cx="14" cy="6.500" rx="9" ry="4.500" fill="#5aa9d6"/><ellipse cx="14" cy="7" rx="7.200" ry="3.300" fill="#3c3c3c"/><ellipse cx="14" cy="24" rx="6" ry="2.500" fill="#5aa9d6"/><path d="M24.500 17c-2 5-10 7-17 5.500" fill="none" stroke="#c8c8c8" stroke-width="2.400"/><path d="M2 20.500l7-4.500v8z" fill="#c8c8c8"/></svg>
<svg style="left:299px;top:117px;" width="32" height="28" viewBox="0 0 32 28"><path d="M8 4h11c-3.500 6 2.500 13-2.500 20.500H1.500c7-6 3.500-13.500 6.500-20.500z" fill="#5aa9d6"/><path d="M19 4h9c-5 7 2 14-4 20.500H13c7-6 2-14 6-20.500z" fill="#5aa9d6" stroke="#444" stroke-width="1.100"/></svg>
<svg style="left:336px;top:117px;" width="28" height="28" viewBox="0 0 28 28"><path d="M14 1.700L26.200 14L14 26.300L1.800 14z" fill="#5aa9d6"/><path d="M8 8L20 20M20 8L8 20" stroke="#444" stroke-width="1.300"/><circle cx="14" cy="14" r="7.300" fill="#5aa9d6"/><circle cx="14" cy="14" r="5.400" fill="#444"/><path d="M8.500 8.500L10.500 10.500M19.500 8.500L17.500 10.500M8.500 19.500L10.500 17.500M19.500 19.500L17.500 17.500" stroke="#444" stroke-width="1.300"/></svg>
<svg style="left:371px;top:117px;" width="28" height="28" viewBox="0 0 28 28"><ellipse cx="7" cy="10" rx="5.500" ry="6.500" transform="rotate(-25 7 10)" fill="#c8c8c8"/><path d="M4.500 4L19 11l-3.500 12.500L3 16z" fill="#5aa9d6"/><circle cx="20" cy="18" r="6.300" fill="#5aa9d6"/><circle cx="20" cy="18" r="4.300" fill="#3c3c3c"/><path d="M9.500 6.500l-3 11.500" stroke="#444" stroke-width="1.200"/></svg>
<svg style="left:405px;top:117px;" width="28" height="28" viewBox="0 0 28 28"><ellipse cx="9" cy="10" rx="5.500" ry="6.500" transform="rotate(-25 9 10)" fill="#5aa9d6"/><path d="M7 4L20 11l-3.500 12L5 16z" fill="#5aa9d6"/><circle cx="20.500" cy="18" r="6.300" fill="#5aa9d6"/><circle cx="20.500" cy="18" r="4.300" fill="#3c3c3c"/><path d="M7 1l20 11M1 14l21 11.500" stroke="#c8c8c8" stroke-width="1.200"/><path d="M13 25c-4-8 2-16 9-16" fill="none" stroke="#c8c8c8" stroke-width="1.400"/><text x="23" y="9" font-size="9" font-weight="bold" fill="#e8e8e8" font-family="Liberation Sans">1</text></svg>
<svg style="left:440.5px;top:117px;" width="28" height="28" viewBox="0 0 28 28"><path d="M14 1L25.500 7.500V20.500L14 27.500L2.500 20.500V7.500z" fill="#5aa9d6"/><path d="M2.500 7.500L14 14L25.500 7.500M14 14V27.500" fill="none" stroke="#c8c8c8" stroke-width="3"/><path d="M2.500 7.500L14 14L25.500 7.500M14 14V27.500" fill="none" stroke="#444" stroke-width=".6"/></svg>
<svg style="left:488px;top:117px;" width="28" height="28" viewBox="0 0 28 28"><path d="M1.500 9.500H20V27.500H1.500z" fill="#5aa9d6"/><circle cx="19" cy="10" r="8.700" fill="#444"/><path d="M6 9.500a13 13 0 0 0 13 13.500" fill="none" stroke="#444" stroke-width="1.200"/><circle cx="19" cy="10" r="8.700" fill="none" stroke="#c8c8c8" stroke-width="1.200"/><path d="M10.500 9.500H20V18.500A8.700 8.700 0 0 1 10.500 9.500z" fill="#5aa9d6" opacity=".0"/></svg>
<svg style="left:523px;top:117px;" width="28" height="28" viewBox="0 0 28 28"><path d="M1.500 9.500H20V27.500H1.500z" fill="#5aa9d6"/><path d="M8 9.500a11 11 0 0 0 12 11" fill="none" stroke="#c8c8c8" stroke-width="2.500"/><circle cx="19" cy="10" r="9" fill="#5aa9d6"/></svg>
<svg style="left:558px;top:117px;" width="28" height="28" viewBox="0 0 28 28"><path d="M1.500 9.500H20V27.500H1.500z" fill="#5aa9d6"/><circle cx="19" cy="10" r="10" fill="#444"/><circle cx="19" cy="10" r="9" fill="none" stroke="#c8c8c8" stroke-width="1.100" stroke-dasharray="3 2"/></svg>
<svg style="left:593px;top:117px;" width="28" height="28" viewBox="0 0 28 28"><path d="M1.500 9.500H20V27.500H1.500z" fill="#5aa9d6"/><path d="M10 9.500H20V19A9 9 0 0 1 10 9.500z" fill="#c8c8c8"/><circle cx="19" cy="10" r="9" fill="none" stroke="#c8c8c8" stroke-width="1.100" stroke-dasharray="3 2"/></svg>
<svg style="left:630px;top:117px;" width="28" height="28" viewBox="0 0 28 28"><path d="M14 1.700L26.200 14L14 26.300L1.800 14z" fill="#5aa9d6"/><path d="M7 20l13-13" stroke="#444" stroke-width="4.500"/><path d="M7.500 20.500l13-13" stroke="#c8c8c8" stroke-width="2"/></svg>
<svg style="left:665px;top:117px;" width="28" height="28" viewBox="0 0 28 28"><path d="M14 1.700L26.200 14L14 26.300L1.800 14z" fill="#5aa9d6"/><path d="M7.500 20.500l13-13" stroke="#444" stroke-width="3.600"/></svg>
<svg style="left:699px;top:117px;" width="28" height="28" viewBox="0 0 28 28"><circle cx="7.500" cy="18" r="6" fill="#5aa9d6"/><path d="M5 12.500l8 2.500 3 11-7 1z" fill="#5aa9d6"/><circle cx="14.500" cy="21.500" r="6" fill="#5aa9d6"/><circle cx="14.500" cy="21.500" r="3.800" fill="#3a3a3a"/><path d="M12 1.500a8 8 0 0 0 0 9 9 9 0 0 0 12 6c1-3-1-8-4-10z" fill="#c8c8c8"/><circle cx="20.500" cy="7" r="3.200" fill="#444"/></svg>
<svg style="left:733px;top:117px;" width="28" height="28" viewBox="0 0 28 28"><path d="M14 12.500L27.500 0 28 13.500 13.500 27.500 2.500 16.500z" fill="none"/><path d="M15 2l12 11.500L13.500 27 2 15.500z" fill="#5aa9d6" transform="translate(1.500 1)"/><path d="M4 13l19 0" stroke="#444" stroke-width="1.200" transform="rotate(45 13 13) translate(2 2)"/><path d="M1.500 1.500l6.500 6.500" stroke="#c8c8c8" stroke-width="2.400"/><path d="M10.500 4.500v6.500H4z" fill="#c8c8c8"/></svg>
<svg style="left:768px;top:117px;" width="28" height="28" viewBox="0 0 28 28"><path d="M17 2.500l10 10L14.500 25 4.500 15z" fill="#5aa9d6"/><path d="M4.500 15l5-5 10 10-5 5z" fill="#c8c8c8" transform="translate(-1.500 1.500)"/><path d="M2 10l7-7" stroke="#c8c8c8" stroke-width="2.400"/><path d="M4.500 1H11v6.500z" fill="#c8c8c8"/></svg>
<svg style="left:803px;top:117px;" width="28" height="28" viewBox="0 0 28 28"><rect x="10" y="1.500" width="6.500" height="15" fill="#5aa9d6"/><rect x="17.500" y="1.500" width="7" height="15" fill="#5aa9d6"/><rect x="2" y="9.500" width="2.500" height="14.500" fill="#c8c8c8"/><rect x="5.500" y="9.500" width="2.500" height="14.500" fill="#c8c8c8"/><rect x="9.500" y="17.500" width="2.500" height="6.500" fill="#c8c8c8"/><rect x="13" y="17.500" width="3" height="6.500" fill="#c8c8c8"/></svg>
<svg style="left:838px;top:117px;" width="28" height="28" viewBox="0 0 28 28"><path d="M4 10c-4 8 2 16 10 16 6 0 9-3 10-7-6 3-15 1-20-9z" fill="#5aa9d6"/><path d="M25 1.500c1.500-1 3.500 1 2.500 2.500L17 15.500l-3-2.500z" fill="#c8c8c8"/><path d="M13 13.500l3.500 3c-2 3-5 4-9.500 4 3-2 4-5 6-7z" fill="#c8c8c8"/></svg>
<svg style="left:874px;top:117px;" width="28" height="28" viewBox="0 0 28 28"><path d="M12.500 2l6 4-7 17-9-8z" fill="#5aa9d6"/><path d="M19 7l8 6.500-9 11-6-2z" fill="#5aa9d6"/><path d="M2 26.500L27 1.500" stroke="#444" stroke-width="3"/><path d="M2 26.500L27 1.500" stroke="#c8c8c8" stroke-width="1.200"/></svg>
<div style="left:315px;top:162px;width:1961px;height:1149px;background:#444444;border:1px solid #707070;"></div>
<div class="t" style="left:324.00px;top:166.99px;font-size:11px;line-height:11px;color:#bebebe;transform:scaleX(1.0574);transform-origin:0 0;">View</div>
<div class="t" style="left:364.50px;top:166.99px;font-size:11px;line-height:11px;color:#bebebe;transform:scaleX(1.0528);transform-origin:0 0;">Shading</div>
<div class="t" style="left:422.00px;top:166.99px;font-size:11px;line-height:11px;color:#bebebe;transform:scaleX(1.1160);transform-origin:0 0;">Lighting</div>
<div class="t" style="left:480.00px;top:166.99px;font-size:11px;line-height:11px;color:#bebebe;transform:scaleX(1.0539);transform-origin:0 0;">Show</div>
<div class="t" style="left:524.00px;top:166.99px;font-size:11px;line-height:11px;color:#bebebe;transform:scaleX(1.0249);transform-origin:0 0;">Renderer</div>
<div class="t" style="left:586.00px;top:166.99px;font-size:11px;line-height:11px;color:#bebebe;transform:scaleX(0.9812);transform-origin:0 0;">Panels</div>
<svg style="left:316px;top:202px;shape-rendering:crispEdges;" width="1959" height="1108" viewBox="0 0 1959 1108"><rect x="0" y="0" width="1959" height="1108" fill="#808a94"/><rect x="572" y="104" width="900" height="900" fill="#000"/><rect x="1877" y="33" width="49" height="49" fill="#c9cdd1" opacity=".82"/><text x="1890.7" y="61" font-size="9.500" font-weight="bold" fill="#7a8189" font-family="Liberation Sans" textLength="21.500" lengthAdjust="spacingAndGlyphs">TOP</text></svg>
<svg style="left:316px;top:202px;shape-rendering:crispEdges;" width="1959" height="1108" viewBox="0 0 1959 1108"><clipPath id="bk"><rect x="572" y="104" width="900" height="900"/></clipPath><g fill="#424344"><rect x="20" y="0" width="1" height="1108"/><rect x="157" y="0" width="1" height="1108"/><rect x="294" y="0" width="1" height="1108"/><rect x="431" y="0" width="1" height="1108"/><rect x="568" y="0" width="1" height="1108"/><rect x="705" y="0" width="1" height="1108"/><rect x="842" y="0" width="1" height="1108"/><rect x="1116" y="0" width="1" height="1108"/><rect x="1253" y="0" width="1" height="1108"/><rect x="1390" y="0" width="1" height="1108"/><rect x="1527" y="0" width="1" height="1108"/><rect x="1664" y="0" width="1" height="1108"/><rect x="1801" y="0" width="1" height="1108"/><rect x="1938" y="0" width="1" height="1108"/><rect x="0" y="6" width="1959" height="1"/><rect x="0" y="143" width="1959" height="1"/><rect x="0" y="280" width="1959" height="1"/><rect x="0" y="417" width="1959" height="1"/><rect x="0" y="690" width="1959" height="1"/><rect x="0" y="827" width="1959" height="1"/><rect x="0" y="964" width="1959" height="1"/><rect x="0" y="1101" width="1959" height="1"/></g><g fill="#3a3a3b"><rect x="978" y="0" width="2" height="1108"/><rect x="0" y="553" width="1959" height="2"/></g><g clip-path="url(#bk)"><g fill="#454545"><rect x="20" y="0" width="1" height="1108"/><rect x="157" y="0" width="1" height="1108"/><rect x="294" y="0" width="1" height="1108"/><rect x="431" y="0" width="1" height="1108"/><rect x="568" y="0" width="1" height="1108"/><rect x="705" y="0" width="1" height="1108"/><rect x="842" y="0" width="1" height="1108"/><rect x="1116" y="0" width="1" height="1108"/><rect x="1253" y="0" width="1" height="1108"/><rect x="1390" y="0" width="1" height="1108"/><rect x="1527" y="0" width="1" height="1108"/><rect x="1664" y="0" width="1" height="1108"/><rect x="1801" y="0" width="1" height="1108"/><rect x="1938" y="0" width="1" height="1108"/><rect x="0" y="6" width="1959" height="1"/><rect x="0" y="143" width="1959" height="1"/><rect x="0" y="280" width="1959" height="1"/><rect x="0" y="417" width="1959" height="1"/><rect x="0" y="690" width="1959" height="1"/><rect x="0" y="827" width="1959" height="1"/><rect x="0" y="964" width="1959" height="1"/><rect x="0" y="1101" width="1959" height="1"/></g><g fill="#464646"><rect x="978" y="0" width="2" height="1108"/><rect x="0" y="553" width="1959" height="2"/></g></g><clipPath id="mc"><polygon points="759.1,403.1 755.2,390.7 751.7,379.8 748.6,368.9 745.9,358.0 743.9,347.2 742.9,335.9 742.8,324.6 742.9,312.9 743.9,301.3 746.2,291.2 749.0,280.4 753.2,269.3 758.7,258.3 765.8,247.4 777.1,234.9 792.3,224.0 812.6,212.9 832.2,206.8 843.1,204.4 854.0,202.9 865.1,201.9 881.5,201.7 898.6,201.9 910.3,203.3 921.2,205.1 932.2,206.4 943.2,208.5 955.0,211.6 965.9,214.0 977.0,216.5 988.2,220.1 999.1,223.8 1010.4,229.3 1021.4,234.3 1033.1,242.3 1044.0,249.0 1055.1,258.2 1066.3,268.1 1077.2,280.2 1088.2,291.9 1099.0,305.3 1111.2,320.4 1122.4,335.2 1132.9,348.4 1144.1,366.3 1155.0,381.0 1166.4,401.3 1178.0,419.9 1188.9,440.1 1200.1,462.7 1211.5,488.3 1216.9,500.9 1220.8,513.3 1224.3,524.2 1227.4,535.1 1230.1,546.0 1232.1,556.8 1233.1,568.1 1233.2,579.4 1233.1,591.1 1232.1,602.7 1229.8,612.8 1227.0,623.6 1222.8,634.7 1217.3,645.7 1210.2,656.6 1198.9,669.1 1183.7,680.0 1163.4,691.1 1143.8,697.2 1132.9,699.6 1122.0,701.1 1110.9,702.1 1094.5,702.3 1077.4,702.1 1065.7,700.7 1054.8,698.9 1043.8,697.6 1032.8,695.5 1021.0,692.4 1010.1,690.0 999.0,687.5 987.8,683.9 976.9,680.2 965.6,674.7 954.6,669.7 942.9,661.7 932.0,655.0 920.9,645.8 909.7,635.9 898.8,623.8 887.8,612.1 877.0,598.7 864.8,583.6 853.6,568.8 843.1,555.6 831.9,537.7 821.0,523.0 809.6,502.7 798.0,484.1 787.1,463.9 775.9,441.3 764.5,415.7"/></clipPath><g clip-path="url(#mc)" fill="#49f0a4"><rect x="742" y="201" width="1" height="502"/><rect x="753" y="201" width="1" height="502"/><rect x="764" y="201" width="1" height="502"/><rect x="775" y="201" width="1" height="502"/><rect x="786" y="201" width="1" height="502"/><rect x="797" y="201" width="1" height="502"/><rect x="809" y="201" width="1" height="502"/><rect x="820" y="201" width="1" height="502"/><rect x="831" y="201" width="1" height="502"/><rect x="842" y="201" width="1" height="502"/><rect x="853" y="201" width="1" height="502"/><rect x="864" y="201" width="1" height="502"/><rect x="875" y="201" width="1" height="502"/><rect x="887" y="201" width="1" height="502"/><rect x="898" y="201" width="1" height="502"/><rect x="909" y="201" width="1" height="502"/><rect x="920" y="201" width="1" height="502"/><rect x="931" y="201" width="1" height="502"/><rect x="942" y="201" width="1" height="502"/><rect x="954" y="201" width="1" height="502"/><rect x="965" y="201" width="1" height="502"/><rect x="976" y="201" width="1" height="502"/><rect x="987" y="201" width="1" height="502"/><rect x="998" y="201" width="1" height="502"/><rect x="1009" y="201" width="1" height="502"/><rect x="1020" y="201" width="1" height="502"/><rect x="1032" y="201" width="1" height="502"/><rect x="1043" y="201" width="1" height="502"/><rect x="1054" y="201" width="1" height="502"/><rect x="1065" y="201" width="1" height="502"/><rect x="1076" y="201" width="1" height="502"/><rect x="1087" y="201" width="1" height="502"/><rect x="1098" y="201" width="1" height="502"/><rect x="1110" y="201" width="1" height="502"/><rect x="1121" y="201" width="1" height="502"/><rect x="1132" y="201" width="1" height="502"/><rect x="1143" y="201" width="1" height="502"/><rect x="1154" y="201" width="1" height="502"/><rect x="1165" y="201" width="1" height="502"/><rect x="1176" y="201" width="1" height="502"/><rect x="1188" y="201" width="1" height="502"/><rect x="1199" y="201" width="1" height="502"/><rect x="1210" y="201" width="1" height="502"/><rect x="1221" y="201" width="1" height="502"/><rect x="1232" y="201" width="1" height="502"/><rect x="742" y="201" width="492" height="1"/><rect x="742" y="212" width="492" height="1"/><rect x="742" y="223" width="492" height="1"/><rect x="742" y="234" width="492" height="1"/><rect x="742" y="246" width="492" height="1"/><rect x="742" y="257" width="492" height="1"/><rect x="742" y="268" width="492" height="1"/><rect x="742" y="279" width="492" height="1"/><rect x="742" y="290" width="492" height="1"/><rect x="742" y="301" width="492" height="1"/><rect x="742" y="312" width="492" height="1"/><rect x="742" y="324" width="492" height="1"/><rect x="742" y="335" width="492" height="1"/><rect x="742" y="346" width="492" height="1"/><rect x="742" y="357" width="492" height="1"/><rect x="742" y="368" width="492" height="1"/><rect x="742" y="379" width="492" height="1"/><rect x="742" y="390" width="492" height="1"/><rect x="742" y="401" width="492" height="1"/><rect x="742" y="413" width="492" height="1"/><rect x="742" y="424" width="492" height="1"/><rect x="742" y="435" width="492" height="1"/><rect x="742" y="446" width="492" height="1"/><rect x="742" y="457" width="492" height="1"/><rect x="742" y="468" width="492" height="1"/><rect x="742" y="479" width="492" height="1"/><rect x="742" y="490" width="492" height="1"/><rect x="742" y="502" width="492" height="1"/><rect x="742" y="513" width="492" height="1"/><rect x="742" y="524" width="492" height="1"/><rect x="742" y="535" width="492" height="1"/><rect x="742" y="546" width="492" height="1"/><rect x="742" y="557" width="492" height="1"/><rect x="742" y="568" width="492" height="1"/><rect x="742" y="580" width="492" height="1"/><rect x="742" y="591" width="492" height="1"/><rect x="742" y="602" width="492" height="1"/><rect x="742" y="613" width="492" height="1"/><rect x="742" y="624" width="492" height="1"/><rect x="742" y="635" width="492" height="1"/><rect x="742" y="646" width="492" height="1"/><rect x="742" y="657" width="492" height="1"/><rect x="742" y="669" width="492" height="1"/><rect x="742" y="680" width="492" height="1"/><rect x="742" y="691" width="492" height="1"/><rect x="742" y="702" width="492" height="1"/></g><polygon points="759.1,403.1 755.2,390.7 751.7,379.8 748.6,368.9 745.9,358.0 743.9,347.2 742.9,335.9 742.8,324.6 742.9,312.9 743.9,301.3 746.2,291.2 749.0,280.4 753.2,269.3 758.7,258.3 765.8,247.4 777.1,234.9 792.3,224.0 812.6,212.9 832.2,206.8 843.1,204.4 854.0,202.9 865.1,201.9 881.5,201.7 898.6,201.9 910.3,203.3 921.2,205.1 932.2,206.4 943.2,208.5 955.0,211.6 965.9,214.0 977.0,216.5 988.2,220.1 999.1,223.8 1010.4,229.3 1021.4,234.3 1033.1,242.3 1044.0,249.0 1055.1,258.2 1066.3,268.1 1077.2,280.2 1088.2,291.9 1099.0,305.3 1111.2,320.4 1122.4,335.2 1132.9,348.4 1144.1,366.3 1155.0,381.0 1166.4,401.3 1178.0,419.9 1188.9,440.1 1200.1,462.7 1211.5,488.3 1216.9,500.9 1220.8,513.3 1224.3,524.2 1227.4,535.1 1230.1,546.0 1232.1,556.8 1233.1,568.1 1233.2,579.4 1233.1,591.1 1232.1,602.7 1229.8,612.8 1227.0,623.6 1222.8,634.7 1217.3,645.7 1210.2,656.6 1198.9,669.1 1183.7,680.0 1163.4,691.1 1143.8,697.2 1132.9,699.6 1122.0,701.1 1110.9,702.1 1094.5,702.3 1077.4,702.1 1065.7,700.7 1054.8,698.9 1043.8,697.6 1032.8,695.5 1021.0,692.4 1010.1,690.0 999.0,687.5 987.8,683.9 976.9,680.2 965.6,674.7 954.6,669.7 942.9,661.7 932.0,655.0 920.9,645.8 909.7,635.9 898.8,623.8 887.8,612.1 877.0,598.7 864.8,583.6 853.6,568.8 843.1,555.6 831.9,537.7 821.0,523.0 809.6,502.7 798.0,484.1 787.1,463.9 775.9,441.3 764.5,415.7" fill="none" stroke="#49f0a4" stroke-width="1"/><path d="M25 1082.5h13" stroke="#f00000" stroke-width="1"/><path d="M25.5 1082v12" stroke="#0000e8" stroke-width="1"/><text x="23" y="1081" font-size="8" font-weight="bold" fill="#18d018" font-family="Liberation Sans">Y</text><text x="39" y="1081" font-size="8" font-weight="bold" fill="#f00000" font-family="Liberation Sans">X</text><text x="23" y="1098" font-size="8" font-weight="bold" fill="#0000e8" font-family="Liberation Sans">Z</text></svg>
<div class="t" style="left:2050.00px;top:205.26px;font-size:9.5px;line-height:9.5px;color:#f6f6f6;font-weight:bold;transform:scaleX(1.0962);transform-origin:0 0;text-shadow:0 0 1px rgba(60,60,60,.4);">Backfaces:</div>
<div class="t" style="left:2185.00px;top:205.26px;font-size:9.5px;line-height:9.5px;color:#f6f6f6;font-weight:bold;transform:scaleX(1.0613);transform-origin:0 0;text-shadow:0 0 1px rgba(60,60,60,.4);">On</div>
<div class="t" style="left:2051.00px;top:225.26px;font-size:9.5px;line-height:9.5px;color:#f6f6f6;font-weight:bold;transform:scaleX(1.0470);transform-origin:0 0;text-shadow:0 0 1px rgba(60,60,60,.4);">Smoothness:</div>
<div class="t" style="left:2185.00px;top:225.26px;font-size:9.5px;line-height:9.5px;color:#f6f6f6;font-weight:bold;transform:scaleX(1.0390);transform-origin:0 0;text-shadow:0 0 1px rgba(60,60,60,.4);">N/A</div>
<div class="t" style="left:2050.00px;top:245.26px;font-size:9.5px;line-height:9.5px;color:#f6f6f6;font-weight:bold;transform:scaleX(1.0790);transform-origin:0 0;text-shadow:0 0 1px rgba(60,60,60,.4);">Instance:</div>
<div class="t" style="left:2185.00px;top:245.26px;font-size:9.5px;line-height:9.5px;color:#f6f6f6;font-weight:bold;transform:scaleX(1.0265);transform-origin:0 0;text-shadow:0 0 1px rgba(60,60,60,.4);">No</div>
<div class="t" style="left:2050.00px;top:265.26px;font-size:9.5px;line-height:9.5px;color:#f6f6f6;font-weight:bold;transform:scaleX(1.0625);transform-origin:0 0;text-shadow:0 0 1px rgba(60,60,60,.4);">Display Layer:</div>
<div class="t" style="left:2185.00px;top:265.26px;font-size:9.5px;line-height:9.5px;color:#f6f6f6;font-weight:bold;transform:scaleX(1.0598);transform-origin:0 0;text-shadow:0 0 1px rgba(60,60,60,.4);">default</div>
<div class="t" style="left:2050.00px;top:285.26px;font-size:9.5px;line-height:9.5px;color:#f6f6f6;font-weight:bold;transform:scaleX(1.0783);transform-origin:0 0;text-shadow:0 0 1px rgba(60,60,60,.4);">Distance From Camera:</div>
<div class="t" style="left:2185.00px;top:285.26px;font-size:9.5px;line-height:9.5px;color:#f6f6f6;font-weight:bold;transform:scaleX(1.1014);transform-origin:0 0;text-shadow:0 0 1px rgba(60,60,60,.4);">1000.1</div>
<div class="t" style="left:2051.00px;top:305.26px;font-size:9.5px;line-height:9.5px;color:#f6f6f6;font-weight:bold;transform:scaleX(1.0913);transform-origin:0 0;text-shadow:0 0 1px rgba(60,60,60,.4);">Selected Objects:</div>
<div class="t" style="left:2185.00px;top:305.26px;font-size:9.5px;line-height:9.5px;color:#f6f6f6;font-weight:bold;text-shadow:0 0 1px rgba(60,60,60,.4);">1</div>
<div class="t" style="left:1144.00px;top:225.26px;font-size:9.5px;line-height:9.5px;color:#f6f6f6;font-weight:bold;transform:scaleX(1.0812);transform-origin:0 0;text-shadow:0 0 1px rgba(60,60,60,.4);">Viewport 2.0 (OpenGL Core Profile with compatibility)</div>
<div class="t" style="left:1273.00px;top:1293.26px;font-size:9.5px;line-height:9.5px;color:#f6f6f6;font-weight:bold;transform:scaleX(1.0777);transform-origin:0 0;text-shadow:0 0 1px rgba(60,60,60,.4);">top -Y</div>
<div class="t" style="left:2070.00px;top:1273.26px;font-size:9.5px;line-height:9.5px;color:#f6f6f6;font-weight:bold;transform:scaleX(1.0815);transform-origin:0 0;text-shadow:0 0 1px rgba(60,60,60,.4);">Materials To Load:</div>
<div class="t" style="left:2185.00px;top:1273.26px;font-size:9.5px;line-height:9.5px;color:#f6f6f6;font-weight:bold;text-shadow:0 0 1px rgba(60,60,60,.4);">0</div>
<div class="t" style="left:2070.00px;top:1293.26px;font-size:9.5px;line-height:9.5px;color:#f6f6f6;font-weight:bold;transform:scaleX(1.0627);transform-origin:0 0;text-shadow:0 0 1px rgba(60,60,60,.4);">Textures To Load:</div>
<div class="t" style="left:2185.00px;top:1293.26px;font-size:9.5px;line-height:9.5px;color:#f6f6f6;font-weight:bold;text-shadow:0 0 1px rgba(60,60,60,.4);">0</div>
<div style="left:320px;top:183px;width:1px;height:17px;background:#6e6e6e;"></div>
<div style="left:319px;top:187px;width:3px;height:9px;background:#777;border-radius:1px;"></div>
<div style="left:425px;top:183px;width:1px;height:17px;background:#6e6e6e;"></div>
<div style="left:424px;top:187px;width:3px;height:9px;background:#777;border-radius:1px;"></div>
<div style="left:569px;top:183px;width:1px;height:17px;background:#6e6e6e;"></div>
<div style="left:568px;top:187px;width:3px;height:9px;background:#777;border-radius:1px;"></div>
<div style="left:713px;top:183px;width:1px;height:17px;background:#6e6e6e;"></div>
<div style="left:712px;top:187px;width:3px;height:9px;background:#777;border-radius:1px;"></div>
<div style="left:857px;top:183px;width:1px;height:17px;background:#6e6e6e;"></div>
<div style="left:856px;top:187px;width:3px;height:9px;background:#777;border-radius:1px;"></div>
<div style="left:944px;top:183px;width:1px;height:17px;background:#6e6e6e;"></div>
<div style="left:943px;top:187px;width:3px;height:9px;background:#777;border-radius:1px;"></div>
<div style="left:974px;top:183px;width:1px;height:17px;background:#6e6e6e;"></div>
<div style="left:973px;top:187px;width:3px;height:9px;background:#777;border-radius:1px;"></div>
<div style="left:1042px;top:183px;width:1px;height:17px;background:#6e6e6e;"></div>
<div style="left:1041px;top:187px;width:3px;height:9px;background:#777;border-radius:1px;"></div>
<svg style="left:326px;top:182px;" width="18" height="19" viewBox="0 0 18 19"><path d="M1.500 3l2-2h13v14l-1.500 3h-13.500z" fill="#2f7da4"/><path d="M1 3.500l2.500-2.500v13l-2.500 3z" fill="#7fd3e8"/><rect x="3.500" y="1" width="12.500" height="13" fill="#39a7cc"/><path d="M6.200 12l3-9h1.600l3 9h-1.700l-.7-2.200H8.600L7.900 12zM9 8.500h2l-1-3.300z" fill="#fff"/></svg>
<svg style="left:346px;top:182px;" width="18" height="19" viewBox="0 0 18 19"><rect x="3" y="3.500" width="10" height="10" fill="none" stroke="#9a9a9a" stroke-width="1.200"/><rect x="4.500" y="5" width="7" height="7" fill="#3fb3c6"/><circle cx="3" cy="3.500" r="1.300" fill="#b0b0b0"/><circle cx="13" cy="3.500" r="1.300" fill="#b0b0b0"/><circle cx="3" cy="13.500" r="1.300" fill="#b0b0b0"/><circle cx="13" cy="13.500" r="1.300" fill="#b0b0b0"/></svg>
<svg style="left:365px;top:182px;" width="18" height="19" viewBox="0 0 18 19"><rect x=".5" y="2" width="14.500" height="13" fill="#4c545e"/><path d="M.5 7.500h10v7.500" fill="none" stroke="#3a4048" stroke-dasharray="1.500 1"/></svg>
<svg style="left:384px;top:182px;" width="18" height="19" viewBox="0 0 18 19"><circle cx="8" cy="9" r="6.500" fill="#555"/><path d="M8 9L2 6.500A6.500 6.500 0 0 1 8 2.500z" fill="#5a5470"/><path d="M8 9V2.500a6.500 6.500 0 0 1 5 2.300z" fill="#4f6a52"/><path d="M8 9L2 6.500A6.500 6.500 0 0 0 2.500 12z" fill="#6a4c50"/></svg>
<svg style="left:402px;top:182px;" width="18" height="19" viewBox="0 0 18 19"><rect x="4" y="1.500" width="12" height="9" fill="#4a6650"/><rect x="2.500" y="3.500" width="12" height="9" fill="#6a5050"/><rect x="1" y="5.500" width="12" height="10" fill="#46626c"/><path d="M2 14l3-3 2 1.500 3-3.500 2 2v3.500H2z" fill="#6c7478"/></svg>
<svg style="left:433px;top:182px;" width="18" height="19" viewBox="0 0 18 19"><rect x="1" y="6" width="9" height="7" fill="#d0d0d0"/><path d="M10.5 9.5l4.500-3.500v8z" fill="#d0d0d0"/></svg>
<svg style="left:451px;top:182px;" width="18" height="19" viewBox="0 0 18 19"><rect x="5" y="3" width="9" height="7" fill="#d0d0d0"/><path d="M14 6.5l4.500-3.500v8z" fill="#d0d0d0"/><rect x="1.500" y="9.500" width="6.500" height="6" fill="#3fb3c6"/><path d="M3 9.500v-2a1.800 1.800 0 0 1 3.600 0v2" fill="none" stroke="#3fb3c6" stroke-width="1.200"/></svg>
<svg style="left:470px;top:182px;" width="18" height="19" viewBox="0 0 18 19"><rect x="5" y="3" width="9" height="7" fill="#d0d0d0"/><path d="M14 6.5l4.500-3.500v8z" fill="#d0d0d0"/><circle cx="5" cy="12.500" r="3" fill="none" stroke="#3fb3c6" stroke-width="1.800"/><path d="M5 8v9M.5 12.500h9M1.800 9.300l6.400 6.400M8.200 9.300l-6.400 6.400" stroke="#3fb3c6" stroke-width="1"/><circle cx="5" cy="12.500" r="1.500" fill="#444"/></svg>
<svg style="left:494px;top:182px;" width="10" height="19" viewBox="0 0 10 19"><path d="M1 2.500h7v12.500l-3.500-3-3.500 3z" fill="#d0d0d0"/></svg>
<svg style="left:509px;top:182px;" width="18" height="19" viewBox="0 0 18 19"><path d="M1.500 16l5-2.500 9 1-4 3z" fill="none" stroke="#c8c8c8" stroke-width="1"/><path d="M4 14.500L9.500 3l1 10z" fill="#3fb3c6"/><path d="M9.500 3l4 11-3-.5z" fill="#8ad0dc"/></svg>
<svg style="left:528px;top:182px;" width="18" height="19" viewBox="0 0 18 19"><path d="M6 1.500l2 2.500H6.800v2.700h2.700V5.500l2.500 2-2.500 2V8.300H6.800V11H8l-2 2.500L4 11h1.200V8.300H2.500v1.200L0 7.500l2.500-2v1.200h2.700V4H4z" fill="#c8c8c8"/><circle cx="11" cy="11" r="3.300" fill="none" stroke="#3fb3c6" stroke-width="1.500"/><path d="M8.500 13.500l-3 3.500" stroke="#3fb3c6" stroke-width="1.800"/></svg>
<svg style="left:548px;top:182px;" width="18" height="19" viewBox="0 0 18 19"><path d="M3.500 12L12 3.500c1-1 3 1 2 2L5.500 14z" fill="#3fb3c6"/><path d="M3 12.500l2 2-3 1z" fill="#3fb3c6"/></svg>
<div style="left:576px;top:182px;width:18px;height:19px;background:#5285a6;"></div>
<svg style="left:577px;top:182px;" width="16" height="19" viewBox="0 0 16 19"><rect x="2" y="3" width="12" height="12" fill="#444" stroke="#e8e8e8" stroke-width="1.200"/><path d="M6 3v12M10 3v12M2 7h12M2 11h12" stroke="#e8e8e8" stroke-width="1"/></svg>
<svg style="left:596px;top:182px;" width="18" height="19" viewBox="0 0 18 19"><rect x="1" y="3.500" width="14.500" height="11.500" fill="none" stroke="#d0d0d0" stroke-width="1.200"/><path d="M1 5.500h14.500M1 13h14.500" stroke="#d0d0d0" stroke-width="1.200" stroke-dasharray="1.500 1.200"/></svg>
<svg style="left:615px;top:182px;" width="18" height="19" viewBox="0 0 18 19"><rect x="1" y="3.500" width="14.500" height="11.500" fill="none" stroke="#d0d0d0" stroke-width="1.200"/><circle cx="8.200" cy="9.200" r="2.600" fill="#3fb3c6"/></svg>
<div style="left:633px;top:182px;width:18px;height:19px;background:#383838;"></div>
<svg style="left:634px;top:182px;" width="16" height="19" viewBox="0 0 16 19"><circle cx="8" cy="9.500" r="4.500" fill="#2c2c2c"/></svg>
<svg style="left:653px;top:182px;" width="18" height="19" viewBox="0 0 18 19"><rect x="1" y="3.500" width="14.500" height="11.500" fill="none" stroke="#d0d0d0" stroke-width="1.200"/><path d="M2 9.200h12.500M8.200 4v10.500" stroke="#3fb3c6" stroke-width="1" stroke-dasharray="1.200 .8"/><path d="M5 7.500h6.500" stroke="#3fb3c6" stroke-width="1"/></svg>
<svg style="left:672px;top:182px;" width="18" height="19" viewBox="0 0 18 19"><rect x="1" y="3.500" width="14.500" height="11.500" fill="none" stroke="#d0d0d0" stroke-width="1.200"/><path d="M3.500 13l3.500-4.500 3 4.500z" fill="#3fb3c6"/><circle cx="10.500" cy="7.500" r="1.800" fill="#3fb3c6"/></svg>
<svg style="left:691px;top:182px;" width="18" height="19" viewBox="0 0 18 19"><rect x="1" y="3.500" width="14.500" height="11.500" fill="none" stroke="#d0d0d0" stroke-width="1.200"/><path d="M4.500 6h7.500v2h-.8l-.3-.9H9.200v5l1 .3v.6H6.300v-.6l1-.3v-5H5.600l-.3.900h-.8z" fill="#3fb3c6"/></svg>
<svg style="left:721px;top:182px;" width="18" height="19" viewBox="0 0 18 19"><path d="M8 1.500l6.500 3.300v8L8 16.500 1.500 12.800v-8z" fill="none" stroke="#d0d0d0" stroke-width="1.200"/><path d="M1.500 4.800L8 8.500l6.500-3.700M8 8.500v8" fill="none" stroke="#d0d0d0" stroke-width="1.200"/><path d="M8 1.500v7M1.500 12.800L8 9l6.500 3.800" stroke="#8a8a8a" stroke-width=".7" fill="none"/></svg>
<div style="left:739px;top:182px;width:19px;height:19px;background:#5285a6;"></div>
<svg style="left:740px;top:182px;" width="17" height="19" viewBox="0 0 17 19"><path d="M8 1.500l6.500 3.300v8L8 16.500 1.500 12.800v-8z" fill="#3fb3c6" stroke="#333" stroke-width=".8"/><path d="M1.500 4.800L8 8.500l6.500-3.700L8 1.500z" fill="#7fd8e4" stroke="#333" stroke-width=".8"/><path d="M8 8.500v8" stroke="#333" stroke-width=".8"/></svg>
<svg style="left:760px;top:182px;" width="18" height="19" viewBox="0 0 18 19"><circle cx="8" cy="9" r="6.500" fill="#d8d8d8"/><path d="M8 2.500a6.500 6.500 0 0 1 0 13z" fill="#444"/><g fill="#d8d8d8"><rect x="8.500" y="4" width="1.500" height="1.500"/><rect x="11" y="5.500" width="1.500" height="1.500"/><rect x="8.500" y="7" width="1.500" height="1.500"/><rect x="11.500" y="8.500" width="1.500" height="1.500"/><rect x="8.500" y="10" width="1.500" height="1.500"/><rect x="11" y="11.500" width="1.500" height="1.500"/><rect x="8.500" y="13" width="1.500" height="1.500"/></g></svg>
<svg style="left:779px;top:182px;" width="18" height="19" viewBox="0 0 18 19"><path d="M8 1.500l6.500 3.300v8L8 16.500 1.500 12.800v-8z" fill="none" stroke="#d0d0d0" stroke-width="1.200"/><path d="M4 6.500l4 2.300 4-2.300v5L8 14 4 11.500z" fill="#3fb3c6"/><path d="M1.500 4.800L8 8.500l6.500-3.700M8 8.500v8" fill="none" stroke="#d0d0d0" stroke-width="1"/></svg>
<svg style="left:797px;top:182px;" width="18" height="19" viewBox="0 0 18 19"><circle cx="8" cy="9" r="6.500" fill="#d8d8d8"/><g fill="#444"><rect x="4" y="4" width="2" height="2"/><rect x="8" y="4" width="2" height="2"/><rect x="2" y="6" width="2" height="2"/><rect x="6" y="6" width="2" height="2"/><rect x="10" y="6" width="2" height="2"/><rect x="4" y="8" width="2" height="2"/><rect x="8" y="8" width="2" height="2"/><rect x="12" y="8" width="2" height="2"/><rect x="2" y="10" width="2" height="2"/><rect x="6" y="10" width="2" height="2"/><rect x="10" y="10" width="2" height="2"/><rect x="4" y="12" width="2" height="2"/><rect x="8" y="12" width="2" height="2"/></g></svg>
<svg style="left:816px;top:182px;" width="18" height="19" viewBox="0 0 18 19"><path d="M8 4a3.600 3.600 0 0 1 2 6.500V13H6v-2.500A3.600 3.600 0 0 1 8 4z" fill="#e0e0e0"/><rect x="6.500" y="13.500" width="3" height="2" fill="#c0c0c0"/><path d="M8 0v2M2.500 2.500l1.500 1.500M13.500 2.500L12 4M0 7.500h2M14 7.500h2" stroke="#d0d0d0" stroke-width="1.200"/></svg>
<svg style="left:835px;top:182px;" width="18" height="19" viewBox="0 0 18 19"><path d="M1 13.500l4-3 3 1.500-4 3z" fill="#c0c0c0"/><circle cx="10.500" cy="8" r="4.800" fill="#3fb3c6"/></svg>
<svg style="left:865px;top:182px;" width="18" height="19" viewBox="0 0 18 19"><circle cx="8" cy="7" r="5.500" fill="#d0d0d0"/><path d="M2 13l3-2M5 15l3-2.500M8.500 15.500l3-2M12 14l2-1.500M1 11l2-1.500" stroke="#3fb3c6" stroke-width="1.200"/></svg>
<svg style="left:884px;top:182px;" width="18" height="19" viewBox="0 0 18 19"><circle cx="5.500" cy="11.500" r="4" fill="#6a6a6a"/><circle cx="10.500" cy="6.500" r="4.500" fill="#d0d0d0"/></svg>
<svg style="left:903px;top:182px;" width="16" height="19" viewBox="0 0 16 19"><circle cx="7.500" cy="9.500" r="5" fill="none" stroke="#3fb3c6" stroke-width="2.400" stroke-dasharray="11 3"/></svg>
<div style="left:921px;top:182px;width:18px;height:19px;background:#383838;"></div>
<svg style="left:922px;top:182px;" width="16" height="19" viewBox="0 0 16 19"><rect x="3" y="4" width="7" height="7" fill="#3a5158"/><rect x="7" y="8" width="7" height="7" fill="#3f6670"/></svg>
<svg style="left:952px;top:182px;" width="18" height="19" viewBox="0 0 18 19"><rect x="1.500" y="2.500" width="8" height="8" fill="none" stroke="#3fb3c6" stroke-width="1.300" stroke-dasharray="2 1.300"/><path d="M8 6v9l2-1.800 1.500 3.300 1.500-.7-1.500-3.200 2.700-.2z" fill="#d8d8d8" stroke="#444" stroke-width=".5"/></svg>
<div style="left:982px;top:183px;width:17px;height:17px;background:#383838;"></div>
<div style="left:1001px;top:183px;width:17px;height:17px;background:#383838;"></div>
<div style="left:1020px;top:183px;width:17px;height:17px;background:#383838;"></div>
<svg style="left:982px;top:182px;" width="17" height="19" viewBox="0 0 17 19"><rect x="3" y="6" width="7.500" height="7.500" fill="#d8d8d8"/><rect x="7" y="3" width="7.500" height="7.500" fill="none" stroke="#d8d8d8" stroke-width="1.300"/><rect x="7" y="6" width="3.500" height="4.500" fill="#888"/></svg>
<svg style="left:1001px;top:182px;" width="17" height="19" viewBox="0 0 17 19"><rect x="3" y="7" width="7.500" height="7.500" fill="#d8d8d8"/><path d="M6 5.500V3.500h8.500V12h-2.500" fill="none" stroke="#d8d8d8" stroke-width="1.300"/></svg>
<svg style="left:1020px;top:182px;" width="17" height="19" viewBox="0 0 17 19"><rect x="2.500" y="3.500" width="12" height="12" fill="none" stroke="#d8d8d8" stroke-width="1.200"/><path d="M5 6l6 7" stroke="#d8d8d8" stroke-width="1.800"/><circle cx="6" cy="7" r="1.800" fill="#d8d8d8"/></svg>
<svg style="left:1052px;top:182px;" width="15" height="19" viewBox="0 0 15 19"><circle cx="7" cy="9" r="5.800" fill="#d8d8d8"/><path d="M7 9L7 3.200M7 9l5 2.900M7 9l-5 2.900" stroke="#444" stroke-width="1.300"/><circle cx="7" cy="9" r="2" fill="#444"/><path d="M7 9l3.500-4.600M7 9l2.200 5.300M7 9l-5.600-1" stroke="#444" stroke-width="1"/></svg>
<div style="left:1070px;top:183px;width:38px;height:15px;background:#2b2b2b;border-radius:2px;"></div>
<div class="t" style="left:1075.00px;top:185.57px;font-size:11.5px;line-height:11.5px;color:#d0d0d0;transform:scaleX(0.9381);transform-origin:0 0;">0.00</div>
<svg style="left:1114px;top:182px;" width="13" height="19" viewBox="0 0 13 19"><rect x="4" y="3.500" width="7.500" height="11" fill="#d8d8d8"/><path d="M5 9a3 3.500 0 0 1 0-5.500" fill="none"/><circle cx="4" cy="9" r="3" fill="#d8d8d8"/><circle cx="4.500" cy="9" r="1.800" fill="#444"/></svg>
<div style="left:1131px;top:183px;width:38px;height:15px;background:#2b2b2b;border-radius:2px;"></div>
<div class="t" style="left:1136.00px;top:185.57px;font-size:11.5px;line-height:11.5px;color:#d0d0d0;transform:scaleX(0.9381);transform-origin:0 0;">1.00</div>
<div style="left:1172px;top:182px;width:18px;height:19px;background:#5285a6;"></div>
<svg style="left:1173px;top:182px;" width="16" height="19" viewBox="0 0 16 19"><circle cx="8" cy="9.500" r="6.500" fill="#3fb3c6" stroke="#2a5a66" stroke-width="1"/><text x="8" y="11.800" font-size="6" font-weight="bold" text-anchor="middle" fill="#1e4a54" font-family="Liberation Sans">ON</text></svg>
<div style="left:1193px;top:183px;width:198px;height:16px;background:#5b5b5b;border-radius:2px;"></div>
<div style="left:1370px;top:183px;width:1px;height:16px;background:#484848;"></div>
<div class="t" style="left:1196.00px;top:186.99px;font-size:11px;line-height:11px;color:#bebebe;transform:scaleX(0.9323);transform-origin:0 0;">ACES 1.0 SDR-video (sRGB)</div>
<svg style="left:1375px;top:187px;" width="12" height="8" viewBox="0 0 12 8"><path d="M1 1h10L6 7z" fill="#d8d8d8"/></svg>
<svg style="left:2px;top:162px;" width="40" height="5" viewBox="0 0 40 5"><rect x="0" y="0" width="1" height="1" fill="#777"/><rect x="3" y="0" width="1" height="1" fill="#777"/><rect x="6" y="0" width="1" height="1" fill="#777"/><rect x="9" y="0" width="1" height="1" fill="#777"/><rect x="12" y="0" width="1" height="1" fill="#777"/><rect x="15" y="0" width="1" height="1" fill="#777"/><rect x="18" y="0" width="1" height="1" fill="#777"/><rect x="21" y="0" width="1" height="1" fill="#777"/><rect x="24" y="0" width="1" height="1" fill="#777"/><rect x="27" y="0" width="1" height="1" fill="#777"/><rect x="30" y="0" width="1" height="1" fill="#777"/><rect x="33" y="0" width="1" height="1" fill="#777"/><rect x="36" y="0" width="1" height="1" fill="#777"/><rect x="0" y="3" width="1" height="1" fill="#777"/><rect x="3" y="3" width="1" height="1" fill="#777"/><rect x="6" y="3" width="1" height="1" fill="#777"/><rect x="9" y="3" width="1" height="1" fill="#777"/><rect x="12" y="3" width="1" height="1" fill="#777"/><rect x="15" y="3" width="1" height="1" fill="#777"/><rect x="18" y="3" width="1" height="1" fill="#777"/><rect x="21" y="3" width="1" height="1" fill="#777"/><rect x="24" y="3" width="1" height="1" fill="#777"/><rect x="27" y="3" width="1" height="1" fill="#777"/><rect x="30" y="3" width="1" height="1" fill="#777"/><rect x="33" y="3" width="1" height="1" fill="#777"/><rect x="36" y="3" width="1" height="1" fill="#777"/></svg>
<div style="left:45px;top:158px;width:2px;height:1154px;background:#3a3a3a;"></div>
<div style="left:4px;top:171px;width:36px;height:36px;background:#5285a6;"></div>
<svg style="left:4px;top:171px;" width="36" height="36" viewBox="0 0 36 36"><g transform="translate(12.500 4.500) scale(1.130)"><path d="M0 0V19.500L4.600 15.300 8 23l3.600-1.600L8.200 13.800 14.500 13.300z" fill="#d4d4d4" stroke="#3a3a3a" stroke-width=".9"/></g></svg>
<svg style="left:4px;top:208px;" width="36" height="36" viewBox="0 0 36 36"><ellipse cx="15" cy="17" rx="12" ry="7.500" transform="rotate(-28 15 17)" fill="none" stroke="#3fb3c6" stroke-width="2" stroke-dasharray="4.500 2.500"/><g transform="translate(17.500 10) scale(1.020)"><path d="M0 0V19.500L4.600 15.300 8 23l3.600-1.600L8.200 13.800 14.500 13.300z" fill="#d4d4d4" stroke="#3a3a3a" stroke-width=".9"/></g></svg>
<svg style="left:4px;top:244px;" width="36" height="36" viewBox="0 0 36 36"><ellipse cx="15" cy="22" rx="11.500" ry="6.500" transform="rotate(28 15 22)" fill="none" stroke="#3fb3c6" stroke-width="2" stroke-dasharray="4.500 2.500"/><path d="M30 5.500c1.200-1 3 .5 2 2L22.500 17l-2.500-2z" fill="#c8c8c8"/><path d="M19.500 15.500l3 2.500c-2 4-6 5.500-11.500 5 3.500-2 5.500-4 8.500-7.500z" fill="#c8c8c8"/></svg>
<svg style="left:4px;top:281px;" width="36" height="36" viewBox="0 0 36 36"><rect x="12" y="12.500" width="12" height="12" fill="#c8c8c8"/><path d="M18 4.500l4 4h-8zM18 32.500l4-4h-8zM4 18.500l4-4v8zM32 18.500l-4-4v8z" fill="#3fb3c6"/></svg>
<svg style="left:4px;top:318px;" width="36" height="36" viewBox="0 0 36 36"><path d="M17.500 32A13.500 13.500 0 1 1 31 18" fill="none" stroke="#3fb3c6" stroke-width="1.400"/><path d="M28.500 17.500h5l-2.500 4z" fill="#3fb3c6"/><path d="M17.500 10.500l8 8-8 8-8-8z" fill="#c8c8c8"/></svg>
<svg style="left:4px;top:355px;" width="36" height="36" viewBox="0 0 36 36"><rect x="7" y="6.500" width="24" height="24" fill="none" stroke="#3fb3c6" stroke-width="1.200" stroke-dasharray="3.500 2"/><rect x="6.500" y="20" width="11" height="11" fill="#c8c8c8"/><path d="M15 16.500h6.500v6.500" fill="none" stroke="#3fb3c6" stroke-width="1.300"/></svg>
<svg style="left:4px;top:430px;" width="36" height="36" viewBox="0 0 36 36"><path d="M10.500 8C14 7.500 17.500 8 19.500 10M20.500 15c-1.500 1.500-2.500 3-3 5M18 25c1 2 4 3 6.800 3" fill="none" stroke="#5aa9d6" stroke-width="1.500"/><rect x="6.500" y="6.500" width="4" height="4" fill="none" stroke="#5aa9d6" stroke-width="1.200"/><rect x="18.500" y="10.500" width="4" height="4" fill="none" stroke="#5aa9d6" stroke-width="1.200"/><rect x="15.500" y="20.500" width="4" height="4" fill="none" stroke="#5aa9d6" stroke-width="1.200"/><rect x="25.500" y="25.500" width="4" height="4" fill="none" stroke="#5aa9d6" stroke-width="1.200"/></svg>
<div style="left:4px;top:471px;width:36px;height:1.5px;background:#8a8a8a;"></div>
<svg style="left:7px;top:481px;" width="30" height="30" viewBox="0 0 30 30"><rect x=".75" y=".75" width="28.500" height="28.500" fill="none" stroke="#d8d8d8" stroke-width="1.500"/><rect x="2.500" y="2.500" width="25" height="25" fill="#bdbdbd"/><path d="M11.5 11.8l3.500-2.300 3.500 2.300-3.500 2.300z" fill="#3a3a3a"/><path d="M6.9 15l3.500-2.300 3.500 2.300-3.500 2.300z" fill="#3a3a3a"/><path d="M16.1 15l3.500-2.300 3.500 2.300-3.500 2.300z" fill="#3a3a3a"/><path d="M11.5 18.2l3.500-2.300 3.500 2.300-3.500 2.300z" fill="#3a3a3a"/></svg>
<svg style="left:7px;top:518px;" width="30" height="30" viewBox="0 0 30 30"><rect x="1" y="1" width="12.500" height="12.500" fill="none" stroke="#d0d0d0" stroke-width="1"/><rect x="16" y=".5" width="13.500" height="13.500" fill="#c4c4c4"/><rect x="1" y="16.500" width="12.500" height="12.500" fill="none" stroke="#d0d0d0"/><rect x="16.500" y="16.500" width="12.500" height="12.500" fill="none" stroke="#d0d0d0"/><path d="M3.75 7.25h7M7.25 3.75v7" stroke="#d0d0d0" stroke-width="1.200"/><path d="M3.75 22.75h7M7.25 19.25v7" stroke="#d0d0d0" stroke-width="1.200"/><path d="M19.25 22.75h7M22.75 19.25v7" stroke="#d0d0d0" stroke-width="1.200"/><path d="M19 7l3.800-2.500L26.600 7l-3.800 2.500z" fill="#3a3a3a"/></svg>
<svg style="left:7px;top:555px;" width="30" height="30" viewBox="0 0 30 30"><rect x="1" y="1" width="12.500" height="28" fill="none" stroke="#d0d0d0"/><rect x="16" y=".5" width="13.500" height="29" fill="#c4c4c4"/><path d="M3.75 15h7M7.25 11.5v7" stroke="#d0d0d0" stroke-width="1.200"/><path d="M19 15l3.800-2.500 3.800 2.500-3.800 2.500z" fill="#3a3a3a"/></svg>
<div style="left:4px;top:589px;width:36px;height:36px;background:#5285a6;"></div>
<svg style="left:7px;top:592px;" width="30" height="30" viewBox="0 0 30 30"><rect x=".75" y=".75" width="28.500" height="28.500" fill="none" stroke="#e0e0e0" stroke-width="1.500"/><rect x="3" y="3" width="24" height="24" fill="none" stroke="#e0e0e0" stroke-width="1"/><path d="M7.500 8v16.500M7.500 12.500h5M7.500 18.500h5M7.500 24.500h5" stroke="#e0e0e0" fill="none"/><path d="M8 6.500h11M14 12.500h10M14 18.500h7M14 24.500h9" stroke="#e0e0e0" stroke-width="1.300"/><rect x="5.500" y="5" width="3" height="3" fill="#e0e0e0" stroke="#333" stroke-width=".6"/><rect x="11.500" y="11" width="3" height="3" fill="#e0e0e0" stroke="#333" stroke-width=".6"/><rect x="11.500" y="17" width="3" height="3" fill="#e0e0e0" stroke="#333" stroke-width=".6"/><rect x="11.500" y="23" width="3" height="3" fill="#e0e0e0" stroke="#333" stroke-width=".6"/></svg>
<div style="left:4px;top:630.5px;width:36px;height:1.5px;background:#8a8a8a;"></div>
<svg style="left:9px;top:643px;" width="26" height="26" viewBox="0 0 26 26"><circle cx="10.500" cy="10" r="7.200" fill="none" stroke="#d0d0d0" stroke-width="2.200"/><path d="M15.500 15.500l6.500 6.500" stroke="#d0d0d0" stroke-width="3" stroke-linecap="round"/></svg>
<svg style="left:6px;top:1275px;" width="32" height="34" viewBox="0 0 32 34"><path d="M4 3L8 1H30V26l-3 7H4z" fill="#2c7fa6"/><path d="M1 5l5-4v23l-5 4z" fill="#7fd3e8"/><rect x="6" y="1" width="23.500" height="23" fill="#37a5c8"/><path d="M6 24h23.500l-1 9H3.500l-2.500-5z" fill="#2a6a8e"/>
<path d="M10.500 20V6h3.300l3.700 8.200L21.200 6h3.300v14h-2.600V10.600l-3.300 7.400h-2.200l-3.300-7.400V20z" fill="#fff"/>
<text x="16.500" y="31" font-size="6.500" font-weight="bold" fill="#e8f4f8" text-anchor="middle" font-family="Liberation Sans">AYA</text></svg>
<div style="left:48px;top:161px;width:264px;height:16px;background:#393939;"></div>
<div style="left:48px;top:161px;width:70px;height:17px;background:#444444;border-radius:4px 4px 0 0;"></div>
<div class="t" style="left:61.50px;top:164.57px;font-size:11.5px;line-height:11.5px;color:#e6e6e6;transform:scaleX(1.0554);transform-origin:0 0;">Outliner</div>
<div class="t" style="left:57.25px;top:182.99px;font-size:11px;line-height:11px;color:#bebebe;transform:scaleX(1.0259);transform-origin:0 0;">Display</div>
<div class="t" style="left:109.25px;top:182.99px;font-size:11px;line-height:11px;color:#bebebe;transform:scaleX(1.0539);transform-origin:0 0;">Show</div>
<div class="t" style="left:153.00px;top:182.99px;font-size:11px;line-height:11px;color:#bebebe;transform:scaleX(1.0389);transform-origin:0 0;">Help</div>
<svg style="left:54px;top:203px;" width="17" height="18" viewBox="0 0 17 18"><rect x="3" y="2.500" width="11" height="13" fill="none" stroke="#606060" stroke-width="1.300" stroke-dasharray="6 3"/><path d="M1 1l4 1.500-3 2zM16 1l-4 1.500 3 2zM1 17l4-1.500-3-2zM16 17l-4-1.500 3-2z" fill="#606060"/></svg>
<div style="left:77px;top:204px;width:228px;height:18px;background:#2b2b2b;border-radius:3px;"></div>
<div class="t" style="left:80.50px;top:208.99px;font-size:11px;line-height:11px;color:#7a7a7a;transform:scaleX(0.9540);transform-origin:0 0;">Search...</div>
<svg style="left:290px;top:209px;" width="12" height="8" viewBox="0 0 12 8"><path d="M1 1h10L6 6.500z" fill="#c8c8c8"/></svg>
<div style="left:50px;top:224px;width:256px;height:1081px;background:#373737;"></div>
<svg style="left:296px;top:226px;" width="10" height="7" viewBox="0 0 10 7"><path d="M1.500 6L5 1.500 8.500 6z" fill="#c0c0c0"/></svg>
<div style="left:296px;top:233px;width:10px;height:1046px;background:#5e5e5e;border-radius:4px;"></div>
<svg style="left:296px;top:1281px;" width="10" height="8" viewBox="0 0 10 8"><path d="M0.500 1.500h9L5 7z" fill="#c0c0c0"/></svg>
<svg style="left:52px;top:1293px;" width="8" height="11" viewBox="0 0 8 11"><path d="M6.500 1v9L1 5.500z" fill="#c0c0c0"/></svg>
<div style="left:63px;top:1293.5px;width:218px;height:10px;background:#5e5e5e;border-radius:5px;"></div>
<svg style="left:283px;top:1293px;" width="8" height="11" viewBox="0 0 8 11"><path d="M1.500 1v9L7 5.500z" fill="#c0c0c0"/></svg>
<svg style="left:135px;top:1306px;" width="86" height="1" viewBox="0 0 86 1"><rect x="0" y="0" width="1" height="1" fill="#7a7a7a"/><rect x="3" y="0" width="1" height="1" fill="#7a7a7a"/><rect x="6" y="0" width="1" height="1" fill="#7a7a7a"/><rect x="9" y="0" width="1" height="1" fill="#7a7a7a"/><rect x="12" y="0" width="1" height="1" fill="#7a7a7a"/><rect x="15" y="0" width="1" height="1" fill="#7a7a7a"/><rect x="18" y="0" width="1" height="1" fill="#7a7a7a"/><rect x="21" y="0" width="1" height="1" fill="#7a7a7a"/><rect x="24" y="0" width="1" height="1" fill="#7a7a7a"/><rect x="27" y="0" width="1" height="1" fill="#7a7a7a"/><rect x="30" y="0" width="1" height="1" fill="#7a7a7a"/><rect x="33" y="0" width="1" height="1" fill="#7a7a7a"/><rect x="36" y="0" width="1" height="1" fill="#7a7a7a"/><rect x="39" y="0" width="1" height="1" fill="#7a7a7a"/><rect x="42" y="0" width="1" height="1" fill="#7a7a7a"/><rect x="45" y="0" width="1" height="1" fill="#7a7a7a"/><rect x="48" y="0" width="1" height="1" fill="#7a7a7a"/><rect x="51" y="0" width="1" height="1" fill="#7a7a7a"/><rect x="54" y="0" width="1" height="1" fill="#7a7a7a"/><rect x="57" y="0" width="1" height="1" fill="#7a7a7a"/><rect x="60" y="0" width="1" height="1" fill="#7a7a7a"/><rect x="63" y="0" width="1" height="1" fill="#7a7a7a"/><rect x="66" y="0" width="1" height="1" fill="#7a7a7a"/><rect x="69" y="0" width="1" height="1" fill="#7a7a7a"/><rect x="72" y="0" width="1" height="1" fill="#7a7a7a"/><rect x="75" y="0" width="1" height="1" fill="#7a7a7a"/><rect x="78" y="0" width="1" height="1" fill="#7a7a7a"/><rect x="81" y="0" width="1" height="1" fill="#7a7a7a"/><rect x="84" y="0" width="1" height="1" fill="#7a7a7a"/></svg>
<div style="left:310px;top:158px;width:2px;height:1154px;background:#3a3a3a;"></div>
<svg style="left:86px;top:229px;" width="16" height="10" viewBox="0 0 16 10"><rect x="0" y="2" width="8.500" height="6.500" fill="#c8c8c8"/><path d="M9.500 5.200L14 1.500v7.500z" fill="#c8c8c8"/></svg>
<div class="t" style="left:104.25px;top:248.99px;font-size:11px;line-height:11px;color:#6c6c6c;transform:scaleX(1.1118);transform-origin:0 0;">top</div>
<svg style="left:86px;top:249px;" width="16" height="10" viewBox="0 0 16 10"><rect x="0" y="2" width="8.500" height="6.500" fill="#c8c8c8"/><path d="M9.500 5.200L14 1.500v7.500z" fill="#c8c8c8"/></svg>
<div class="t" style="left:104.25px;top:268.99px;font-size:11px;line-height:11px;color:#6c6c6c;transform:scaleX(1.1698);transform-origin:0 0;">front</div>
<svg style="left:86px;top:269px;" width="16" height="10" viewBox="0 0 16 10"><rect x="0" y="2" width="8.500" height="6.500" fill="#c8c8c8"/><path d="M9.500 5.200L14 1.500v7.500z" fill="#c8c8c8"/></svg>
<div class="t" style="left:104.25px;top:288.99px;font-size:11px;line-height:11px;color:#6c6c6c;transform:scaleX(0.9912);transform-origin:0 0;">side</div>
<svg style="left:86px;top:289px;" width="16" height="10" viewBox="0 0 16 10"><rect x="0" y="2" width="8.500" height="6.500" fill="#c8c8c8"/><path d="M9.500 5.200L14 1.500v7.500z" fill="#c8c8c8"/></svg>
<div class="t" style="left:104.25px;top:308.99px;font-size:11px;line-height:11px;color:#bebebe;transform:scaleX(1.0120);transform-origin:0 0;">planarTrimmedSurface1</div>
<svg style="left:85px;top:307px;" width="16" height="14" viewBox="0 0 16 14"><path d="M4.3 3.7l3.700-2.300 3.700 2.300-3.700 2.300z" fill="#d0d0d0"/><path d="M0 6.8l3.700-2.300 3.700 2.300-3.700 2.300z" fill="#d0d0d0"/><path d="M8.6 6.8l3.700-2.300 3.700 2.300-3.700 2.300z" fill="#d0d0d0"/><path d="M4.3 9.9l3.700-2.300 3.700 2.300-3.700 2.300z" fill="#d0d0d0"/></svg>
<div class="t" style="left:104.25px;top:328.99px;font-size:11px;line-height:11px;color:#bebebe;transform:scaleX(1.0281);transform-origin:0 0;">singleProfileBirailSurface1</div>
<svg style="left:86px;top:326px;" width="15" height="16" viewBox="0 0 15 16"><path d="M5 1h9.500c-2 4-2.500 8-3 12l-2.500 2.500L1 12.500c2.500-3 3.500-7 4-11.500z" fill="#5aa9d6"/></svg>
<div class="t" style="left:104.25px;top:348.99px;font-size:11px;line-height:11px;color:#bebebe;transform:scaleX(1.0163);transform-origin:0 0;">polySurface1</div>
<svg style="left:85px;top:347px;" width="16" height="14" viewBox="0 0 16 14"><path d="M4.3 3.7l3.700-2.300 3.700 2.300-3.700 2.300z" fill="#d0d0d0"/><path d="M0 6.8l3.700-2.300 3.700 2.300-3.700 2.300z" fill="#d0d0d0"/><path d="M8.6 6.8l3.700-2.300 3.700 2.300-3.700 2.300z" fill="#d0d0d0"/><path d="M4.3 9.9l3.700-2.300 3.700 2.300-3.700 2.300z" fill="#d0d0d0"/></svg>
<div class="t" style="left:104.25px;top:368.99px;font-size:11px;line-height:11px;color:#bebebe;transform:scaleX(1.0346);transform-origin:0 0;">nurbsCube1</div>
<svg style="left:85px;top:367px;" width="16" height="14" viewBox="0 0 16 14"><path d="M5 2.500h10.500L10 12H0z" fill="#c8c8c8"/><path d="M0 7h8.500" stroke="#e02020" stroke-width="1.300"/><path d="M7 4.500L11 7 7 9.500z" fill="#e02020"/></svg>
<div class="t" style="left:104.25px;top:388.99px;font-size:11px;line-height:11px;color:#bebebe;transform:scaleX(1.0120);transform-origin:0 0;">curve1attachedCurve1</div>
<svg style="left:86px;top:385px;" width="14" height="18" viewBox="0 0 14 18"><path d="M7.500 1c6 3-1 6-4.500 9-2.500 2-1.500 5 1.500 6.500" fill="none" stroke="#5aa9d6" stroke-width="1.600"/></svg>
<div style="left:50px;top:404px;width:244px;height:20px;background:#5285a6;"></div>
<div class="t" style="left:104.25px;top:408.99px;font-size:11px;line-height:11px;color:#ffffff;transform:scaleX(1.0163);transform-origin:0 0;">planarTrimmedSurface2</div>
<svg style="left:85px;top:407px;" width="16" height="14" viewBox="0 0 16 14"><path d="M4.3 3.7l3.700-2.300 3.700 2.300-3.700 2.300z" fill="#d8d8d8"/><path d="M0 6.8l3.700-2.300 3.700 2.300-3.700 2.300z" fill="#d8d8d8"/><path d="M8.6 6.8l3.700-2.300 3.700 2.300-3.700 2.300z" fill="#d8d8d8"/><path d="M4.3 9.9l3.700-2.300 3.700 2.300-3.700 2.300z" fill="#d8d8d8"/><path d="M8 .3l8 5.200-8 5.700-8-5.700z" fill="none" stroke="#2a2a2a" stroke-width=".5" transform="translate(0 .8)"/></svg>
<div class="t" style="left:104.25px;top:428.99px;font-size:11px;line-height:11px;color:#bebebe;transform:scaleX(1.0731);transform-origin:0 0;">defaultLightSet</div>
<svg style="left:84.5px;top:426px;" width="16" height="16" viewBox="0 0 16 16"><circle cx="8" cy="8" r="7.200" fill="none" stroke="#c8c8c8" stroke-width="1.300"/><rect x="6.500" y="4" width="5" height="6" fill="#3fb3c6"/><circle cx="6" cy="10" r="2.800" fill="#c8c8c8"/></svg>
<div class="t" style="left:104.25px;top:448.99px;font-size:11px;line-height:11px;color:#bebebe;transform:scaleX(1.0697);transform-origin:0 0;">defaultObjectSet</div>
<svg style="left:84.5px;top:446px;" width="16" height="16" viewBox="0 0 16 16"><circle cx="8" cy="8" r="7.200" fill="none" stroke="#c8c8c8" stroke-width="1.300"/><rect x="6.500" y="4" width="5" height="6" fill="#3fb3c6"/><circle cx="6" cy="10" r="2.800" fill="#c8c8c8"/></svg>
<svg style="left:71px;top:369px;" width="10" height="10" viewBox="0 0 10 10"><rect x=".5" y=".5" width="9" height="9" fill="none" stroke="#8a8a8a"/><path d="M2.500 5h5M5 2.500v5" stroke="#c8c8c8" stroke-width="1"/></svg>
<div style="left:94px;top:230px;width:386px;height:18px;background:#ffffdc;border:1px solid #000;box-shadow:1px 1px 2px rgba(0,0,0,.45);"></div>
<div class="t" style="left:97.50px;top:233.99px;font-size:11px;line-height:11px;color:#000;transform:scaleX(1.0673);transform-origin:0 0;">Enter text to limit the listing (e.g., P* to show all objects beginning with P)</div>
<div style="left:2279px;top:158px;width:2px;height:1154px;background:#363636;"></div>
<svg style="left:2482px;top:163px;" width="15" height="15" viewBox="0 0 15 15"><path d="M7.500 6v3.500M7.500 9.500l-3.500 2.500M7.500 9.500l3.500 2.500" stroke="#d8d8d8" stroke-width="1.600"/><path d="M7.500 0l3 4h-6z" fill="#6cc04a"/><path d="M0 14l1.500-4.500 3.500 3z" fill="#3f7fe8"/><path d="M15 14l-1.500-4.500-3.500 3z" fill="#e04848"/></svg>
<svg style="left:2502px;top:163px;" width="16" height="15" viewBox="0 0 16 15"><path d="M5 13A6.500 6.500 0 1 1 14.500 8" fill="none" stroke="#3fb3c6" stroke-width="3"/><path d="M14.500 8a6.500 6.500 0 0 1-2 4.500" fill="none" stroke="#808080" stroke-width="3"/><path d="M6 8.500a2.500 2.500 0 0 1 4-2" fill="none" stroke="#3fb3c6" stroke-width="1.800"/></svg>
<svg style="left:2523px;top:163px;" width="16" height="15" viewBox="0 0 16 15"><path d="M1.500 0v13.500H15" fill="none" stroke="#8a8a8a" stroke-width="1.200"/><path d="M4 11L12.500 2.500" stroke="#3fb3c6" stroke-width="1.800"/><path d="M8.500 1h6v6z" fill="#3fb3c6"/></svg>
<div class="t" style="left:2293.25px;top:186.99px;font-size:11px;line-height:11px;color:#bebebe;transform:scaleX(1.0221);transform-origin:0 0;">Channels</div>
<div class="t" style="left:2356.25px;top:186.99px;font-size:11px;line-height:11px;color:#bebebe;transform:scaleX(1.0419);transform-origin:0 0;">Edit</div>
<div class="t" style="left:2391.50px;top:186.99px;font-size:11px;line-height:11px;color:#bebebe;transform:scaleX(1.0538);transform-origin:0 0;">Object</div>
<div class="t" style="left:2440.25px;top:186.99px;font-size:11px;line-height:11px;color:#bebebe;transform:scaleX(1.0449);transform-origin:0 0;">Show</div>
<div class="t" style="left:2290.00px;top:211.43px;font-size:9.3px;line-height:9.3px;color:#c4c4c4;font-weight:bold;transform:scaleX(1.0430);transform-origin:0 0;">planarTrimmedSurface2</div>
<div style="left:2462px;top:222px;width:74px;height:15px;background:#2b2b2b;border-radius:2px;"></div>
<div class="t" style="left:2400.46px;top:225.99px;font-size:11px;line-height:11px;color:#bebebe;transform:scaleX(0.9850);transform-origin:100% 0;">Translate X</div>
<div class="t" style="left:2470.80px;top:224.99px;font-size:11px;line-height:11px;color:#d0d0d0;">0</div>
<div style="left:2462px;top:238px;width:74px;height:15px;background:#2b2b2b;border-radius:2px;"></div>
<div class="t" style="left:2400.66px;top:241.99px;font-size:11px;line-height:11px;color:#bebebe;transform:scaleX(0.9705);transform-origin:100% 0;">Translate Y</div>
<div class="t" style="left:2470.80px;top:240.99px;font-size:11px;line-height:11px;color:#d0d0d0;">0</div>
<div style="left:2462px;top:254px;width:74px;height:15px;background:#2b2b2b;border-radius:2px;"></div>
<div class="t" style="left:2401.08px;top:257.99px;font-size:11px;line-height:11px;color:#bebebe;transform:scaleX(0.9960);transform-origin:100% 0;">Translate Z</div>
<div class="t" style="left:2470.80px;top:256.99px;font-size:11px;line-height:11px;color:#d0d0d0;">0</div>
<div style="left:2462px;top:270px;width:74px;height:15px;background:#2b2b2b;border-radius:2px;"></div>
<div class="t" style="left:2413.50px;top:273.99px;font-size:11px;line-height:11px;color:#bebebe;transform:scaleX(1.0046);transform-origin:100% 0;">Rotate X</div>
<div class="t" style="left:2470.80px;top:272.99px;font-size:11px;line-height:11px;color:#d0d0d0;">0</div>
<div style="left:2462px;top:286px;width:74px;height:15px;background:#2b2b2b;border-radius:2px;"></div>
<div class="t" style="left:2413.70px;top:289.99px;font-size:11px;line-height:11px;color:#bebebe;transform:scaleX(0.9858);transform-origin:100% 0;">Rotate Y</div>
<div class="t" style="left:2470.80px;top:288.99px;font-size:11px;line-height:11px;color:#d0d0d0;">0</div>
<div style="left:2462px;top:302px;width:74px;height:15px;background:#2b2b2b;border-radius:2px;"></div>
<div class="t" style="left:2414.12px;top:305.99px;font-size:11px;line-height:11px;color:#bebebe;transform:scaleX(1.0194);transform-origin:100% 0;">Rotate Z</div>
<div class="t" style="left:2470.80px;top:304.99px;font-size:11px;line-height:11px;color:#d0d0d0;">0</div>
<div style="left:2462px;top:318px;width:74px;height:15px;background:#2b2b2b;border-radius:2px;"></div>
<div class="t" style="left:2418.39px;top:321.99px;font-size:11px;line-height:11px;color:#bebebe;transform:scaleX(0.9232);transform-origin:100% 0;">Scale X</div>
<div class="t" style="left:2470.80px;top:320.99px;font-size:11px;line-height:11px;color:#d0d0d0;">1</div>
<div style="left:2462px;top:334px;width:74px;height:15px;background:#2b2b2b;border-radius:2px;"></div>
<div class="t" style="left:2418.59px;top:337.99px;font-size:11px;line-height:11px;color:#bebebe;transform:scaleX(0.9016);transform-origin:100% 0;">Scale Y</div>
<div class="t" style="left:2470.80px;top:336.99px;font-size:11px;line-height:11px;color:#d0d0d0;">1</div>
<div style="left:2462px;top:350px;width:74px;height:15px;background:#2b2b2b;border-radius:2px;"></div>
<div class="t" style="left:2419.01px;top:353.99px;font-size:11px;line-height:11px;color:#bebebe;transform:scaleX(0.9386);transform-origin:100% 0;">Scale Z</div>
<div class="t" style="left:2470.80px;top:352.99px;font-size:11px;line-height:11px;color:#d0d0d0;">1</div>
<div style="left:2462px;top:366px;width:74px;height:15px;background:#2b2b2b;border-radius:2px;"></div>
<div class="t" style="left:2416.77px;top:369.99px;font-size:11px;line-height:11px;color:#bebebe;transform:scaleX(1.1004);transform-origin:100% 0;">Visibility</div>
<div class="t" style="left:2470.80px;top:368.99px;font-size:11px;line-height:11px;color:#d0d0d0;">on</div>
<div class="t" style="left:2290.00px;top:387.43px;font-size:9.3px;line-height:9.3px;color:#c4c4c4;font-weight:bold;transform:scaleX(0.9806);transform-origin:0 0;">SHAPES</div>
<div style="left:2289px;top:398px;width:247px;height:14.5px;background:#3a3a3a;"></div>
<div class="t" style="left:2299.30px;top:403.43px;font-size:9.3px;line-height:9.3px;color:#c4c4c4;font-weight:bold;transform:scaleX(1.0310);transform-origin:0 0;">planarTrimmedSurfaceShape2</div>
<div class="t" style="left:2290.00px;top:419.43px;font-size:9.3px;line-height:9.3px;color:#c4c4c4;font-weight:bold;transform:scaleX(1.0411);transform-origin:0 0;">INPUTS</div>
<div class="t" style="left:2299.30px;top:435.43px;font-size:9.3px;line-height:9.3px;color:#c4c4c4;font-weight:bold;transform:scaleX(0.9829);transform-origin:0 0;">nurbsTessellate1</div>
<div class="t" style="left:2299.30px;top:451.43px;font-size:9.3px;line-height:9.3px;color:#c4c4c4;font-weight:bold;transform:scaleX(1.0365);transform-origin:0 0;">planarTrimSurface1</div>
<div style="left:2289px;top:478px;width:248px;height:487px;background:#2b2b2b;"></div>
<svg style="left:2370px;top:971px;" width="86" height="1" viewBox="0 0 86 1"><rect x="0" y="0" width="1" height="1" fill="#7a7a7a"/><rect x="3" y="0" width="1" height="1" fill="#7a7a7a"/><rect x="6" y="0" width="1" height="1" fill="#7a7a7a"/><rect x="9" y="0" width="1" height="1" fill="#7a7a7a"/><rect x="12" y="0" width="1" height="1" fill="#7a7a7a"/><rect x="15" y="0" width="1" height="1" fill="#7a7a7a"/><rect x="18" y="0" width="1" height="1" fill="#7a7a7a"/><rect x="21" y="0" width="1" height="1" fill="#7a7a7a"/><rect x="24" y="0" width="1" height="1" fill="#7a7a7a"/><rect x="27" y="0" width="1" height="1" fill="#7a7a7a"/><rect x="30" y="0" width="1" height="1" fill="#7a7a7a"/><rect x="33" y="0" width="1" height="1" fill="#7a7a7a"/><rect x="36" y="0" width="1" height="1" fill="#7a7a7a"/><rect x="39" y="0" width="1" height="1" fill="#7a7a7a"/><rect x="42" y="0" width="1" height="1" fill="#7a7a7a"/><rect x="45" y="0" width="1" height="1" fill="#7a7a7a"/><rect x="48" y="0" width="1" height="1" fill="#7a7a7a"/><rect x="51" y="0" width="1" height="1" fill="#7a7a7a"/><rect x="54" y="0" width="1" height="1" fill="#7a7a7a"/><rect x="57" y="0" width="1" height="1" fill="#7a7a7a"/><rect x="60" y="0" width="1" height="1" fill="#7a7a7a"/><rect x="63" y="0" width="1" height="1" fill="#7a7a7a"/><rect x="66" y="0" width="1" height="1" fill="#7a7a7a"/><rect x="69" y="0" width="1" height="1" fill="#7a7a7a"/><rect x="72" y="0" width="1" height="1" fill="#7a7a7a"/><rect x="75" y="0" width="1" height="1" fill="#7a7a7a"/><rect x="78" y="0" width="1" height="1" fill="#7a7a7a"/><rect x="81" y="0" width="1" height="1" fill="#7a7a7a"/><rect x="84" y="0" width="1" height="1" fill="#7a7a7a"/></svg>
<div style="left:2285px;top:980px;width:256px;height:331px;background:#444444;border:1px solid #3a3a3a;"></div>
<div style="left:2286px;top:981px;width:254px;height:17px;background:#3a3a3a;"></div>
<div style="left:2287px;top:982px;width:64px;height:16px;background:#444444;border-radius:4px 4px 0 0;"></div>
<div style="left:2353px;top:982px;width:53px;height:16px;background:#383838;border:1px solid #2b2b2b;border-bottom:none;border-radius:4px 4px 0 0;"></div>
<div class="t" style="left:2300.40px;top:985.99px;font-size:11px;line-height:11px;color:#e6e6e6;transform:scaleX(1.0259);transform-origin:0 0;">Display</div>
<div class="t" style="left:2367.00px;top:985.99px;font-size:11px;line-height:11px;color:#a0a0a0;transform:scaleX(1.0274);transform-origin:0 0;">Anim</div>
<div class="t" style="left:2296.25px;top:1003.99px;font-size:11px;line-height:11px;color:#bebebe;transform:scaleX(0.9162);transform-origin:0 0;">Layers</div>
<div class="t" style="left:2342.50px;top:1003.99px;font-size:11px;line-height:11px;color:#bebebe;transform:scaleX(1.0882);transform-origin:0 0;">Options</div>
<div class="t" style="left:2399.00px;top:1003.99px;font-size:11px;line-height:11px;color:#bebebe;transform:scaleX(1.0499);transform-origin:0 0;">Help</div>
<svg style="left:2443px;top:1023px;" width="16" height="13" viewBox="0 0 16 13"><path d="M0 7l6-4.500 4 2.500v4l-4 2.500z" fill="#c8c8c8"/><path d="M11.500 3l3.500 4h-2.200v5h-2.600V7H8z" fill="#3fb3c6" stroke="#444" stroke-width=".5"/></svg>
<svg style="left:2465px;top:1023px;" width="17" height="13" viewBox="0 0 17 13"><path d="M0 7l6-4.500 4 2.500v4l-4 2.500z" fill="#c8c8c8"/><path d="M12 12.500l3.500-4h-2.200V4h-2.600v4.500H8.500z" fill="#3fb3c6" stroke="#444" stroke-width=".5"/></svg>
<svg style="left:2493px;top:1021px;" width="17" height="15" viewBox="0 0 17 15"><path d="M0 9l6.500-4.500 5 3-6.500 5z" fill="#c8c8c8"/><path d="M9 3.500h6M12 .5v6" stroke="#3fb3c6" stroke-width="2"/></svg>
<svg style="left:2517px;top:1021px;" width="15" height="15" viewBox="0 0 15 15"><path d="M0 9l6.500-4.500 5 3-6.500 5z" fill="#c8c8c8"/><circle cx="10.500" cy="4" r="3.200" fill="#3fb3c6"/></svg>
<div style="left:2289px;top:1045px;width:248px;height:248px;background:#2b2b2b;"></div>
<div style="left:2289px;top:1293px;width:248px;height:13px;background:#393939;"></div>
<svg style="left:2291px;top:1294px;" width="8" height="11" viewBox="0 0 8 11"><path d="M6.500 1v9L1 5.500z" fill="#c0c0c0"/></svg>
<div style="left:2302px;top:1294.5px;width:155px;height:10px;background:#5e5e5e;border-radius:5px;"></div>
<svg style="left:2526px;top:1294px;" width="8" height="11" viewBox="0 0 8 11"><path d="M1.500 1v9L7 5.500z" fill="#c0c0c0"/></svg>
<div style="left:2541px;top:158px;width:19px;height:1154px;background:#3c3c3c;"></div>
<div style="left:2541px;top:160px;width:16px;height:162px;background:#444444;border-radius:0 4px 4px 0;"></div>
<div style="left:2544px;top:325px;width:13px;height:107px;background:#393939;border:1px solid #303030;border-left:none;border-radius:0 4px 4px 0;"></div>
<div style="left:2544px;top:435px;width:13px;height:112px;background:#393939;border:1px solid #303030;border-left:none;border-radius:0 4px 4px 0;"></div>
<div class="t" style="left:2555.14px;top:174.5px;font-size:11.5px;line-height:11.5px;color:#e0e0e0;letter-spacing:-0.133px;transform-origin:0 0;transform:rotate(90deg);">Channel Box / Layer Editor</div>
<div class="t" style="left:2555.14px;top:338.5px;font-size:11.5px;line-height:11.5px;color:#8c8c8c;letter-spacing:0.183px;transform-origin:0 0;transform:rotate(90deg);">Attribute Editor</div>
<div class="t" style="left:2555.14px;top:448.5px;font-size:11.5px;line-height:11.5px;color:#8c8c8c;letter-spacing:0.234px;transform-origin:0 0;transform:rotate(90deg);">Modeling Toolkit</div>
<div style="left:0px;top:1312px;width:2560px;height:3px;background:#383838;"></div>
<svg style="left:3px;top:1320px;" width="5" height="41" viewBox="0 0 5 41"><rect x="0" y="0" width="1" height="1" fill="#777"/><rect x="3" y="0" width="1" height="1" fill="#777"/><rect x="0" y="3" width="1" height="1" fill="#777"/><rect x="3" y="3" width="1" height="1" fill="#777"/><rect x="0" y="6" width="1" height="1" fill="#777"/><rect x="3" y="6" width="1" height="1" fill="#777"/><rect x="0" y="9" width="1" height="1" fill="#777"/><rect x="3" y="9" width="1" height="1" fill="#777"/><rect x="0" y="12" width="1" height="1" fill="#777"/><rect x="3" y="12" width="1" height="1" fill="#777"/><rect x="0" y="15" width="1" height="1" fill="#777"/><rect x="3" y="15" width="1" height="1" fill="#777"/><rect x="0" y="18" width="1" height="1" fill="#777"/><rect x="3" y="18" width="1" height="1" fill="#777"/><rect x="0" y="21" width="1" height="1" fill="#777"/><rect x="3" y="21" width="1" height="1" fill="#777"/><rect x="0" y="24" width="1" height="1" fill="#777"/><rect x="3" y="24" width="1" height="1" fill="#777"/><rect x="0" y="27" width="1" height="1" fill="#777"/><rect x="3" y="27" width="1" height="1" fill="#777"/><rect x="0" y="30" width="1" height="1" fill="#777"/><rect x="3" y="30" width="1" height="1" fill="#777"/><rect x="0" y="33" width="1" height="1" fill="#777"/><rect x="3" y="33" width="1" height="1" fill="#777"/><rect x="0" y="36" width="1" height="1" fill="#777"/><rect x="3" y="36" width="1" height="1" fill="#777"/><rect x="0" y="39" width="1" height="1" fill="#777"/><rect x="3" y="39" width="1" height="1" fill="#777"/></svg>
<div style="left:24px;top:1316px;width:2218px;height:8px;background:#474747;"></div>
<div style="left:24px;top:1356px;width:2218px;height:8px;background:#474747;"></div>
<div style="left:24px;top:1356px;width:2236px;height:2px;background:#626262;"></div>
<div style="left:16px;top:1324px;width:2253px;height:32px;background:#2b2b2b;"></div>
<div style="left:24px;top:1316px;width:19px;height:48px;background:#565656;"></div>
<div style="left:24px;top:1324px;width:18.5px;height:32px;background:#3c3c3c;"></div>
<div style="left:24px;top:1357px;width:19px;height:1px;background:#7a7a7a;"></div>
<svg style="left:0px;top:1316px;shape-rendering:crispEdges;" width="2270" height="48" viewBox="0 0 2270 48"><g fill="#1e1e1e"><rect x="43" y="0" width="1" height="8"/><rect x="43" y="40" width="1" height="8"/><rect x="80" y="0" width="1" height="8"/><rect x="80" y="40" width="1" height="8"/><rect x="117" y="0" width="1" height="8"/><rect x="117" y="40" width="1" height="8"/><rect x="154" y="0" width="1" height="8"/><rect x="154" y="40" width="1" height="8"/><rect x="192" y="0" width="1" height="8"/><rect x="192" y="40" width="1" height="8"/><rect x="229" y="0" width="1" height="8"/><rect x="229" y="40" width="1" height="8"/><rect x="266" y="0" width="1" height="8"/><rect x="266" y="40" width="1" height="8"/><rect x="303" y="0" width="1" height="8"/><rect x="303" y="40" width="1" height="8"/><rect x="341" y="0" width="1" height="8"/><rect x="341" y="40" width="1" height="8"/><rect x="378" y="0" width="1" height="8"/><rect x="378" y="40" width="1" height="8"/><rect x="415" y="0" width="1" height="8"/><rect x="415" y="40" width="1" height="8"/><rect x="452" y="0" width="1" height="8"/><rect x="452" y="40" width="1" height="8"/><rect x="490" y="0" width="1" height="8"/><rect x="490" y="40" width="1" height="8"/><rect x="527" y="0" width="1" height="8"/><rect x="527" y="40" width="1" height="8"/><rect x="564" y="0" width="1" height="8"/><rect x="564" y="40" width="1" height="8"/><rect x="602" y="0" width="1" height="8"/><rect x="602" y="40" width="1" height="8"/><rect x="639" y="0" width="1" height="8"/><rect x="639" y="40" width="1" height="8"/><rect x="676" y="0" width="1" height="8"/><rect x="676" y="40" width="1" height="8"/><rect x="713" y="0" width="1" height="8"/><rect x="713" y="40" width="1" height="8"/><rect x="751" y="0" width="1" height="8"/><rect x="751" y="40" width="1" height="8"/><rect x="788" y="0" width="1" height="8"/><rect x="788" y="40" width="1" height="8"/><rect x="825" y="0" width="1" height="8"/><rect x="825" y="40" width="1" height="8"/><rect x="862" y="0" width="1" height="8"/><rect x="862" y="40" width="1" height="8"/><rect x="900" y="0" width="1" height="8"/><rect x="900" y="40" width="1" height="8"/><rect x="937" y="0" width="1" height="8"/><rect x="937" y="40" width="1" height="8"/><rect x="974" y="0" width="1" height="8"/><rect x="974" y="40" width="1" height="8"/><rect x="1012" y="0" width="1" height="8"/><rect x="1012" y="40" width="1" height="8"/><rect x="1049" y="0" width="1" height="8"/><rect x="1049" y="40" width="1" height="8"/><rect x="1086" y="0" width="1" height="8"/><rect x="1086" y="40" width="1" height="8"/><rect x="1123" y="0" width="1" height="8"/><rect x="1123" y="40" width="1" height="8"/><rect x="1161" y="0" width="1" height="8"/><rect x="1161" y="40" width="1" height="8"/><rect x="1198" y="0" width="1" height="8"/><rect x="1198" y="40" width="1" height="8"/><rect x="1235" y="0" width="1" height="8"/><rect x="1235" y="40" width="1" height="8"/><rect x="1272" y="0" width="1" height="8"/><rect x="1272" y="40" width="1" height="8"/><rect x="1310" y="0" width="1" height="8"/><rect x="1310" y="40" width="1" height="8"/><rect x="1347" y="0" width="1" height="8"/><rect x="1347" y="40" width="1" height="8"/><rect x="1384" y="0" width="1" height="8"/><rect x="1384" y="40" width="1" height="8"/><rect x="1421" y="0" width="1" height="8"/><rect x="1421" y="40" width="1" height="8"/><rect x="1459" y="0" width="1" height="8"/><rect x="1459" y="40" width="1" height="8"/><rect x="1496" y="0" width="1" height="8"/><rect x="1496" y="40" width="1" height="8"/><rect x="1533" y="0" width="1" height="8"/><rect x="1533" y="40" width="1" height="8"/><rect x="1571" y="0" width="1" height="8"/><rect x="1571" y="40" width="1" height="8"/><rect x="1608" y="0" width="1" height="8"/><rect x="1608" y="40" width="1" height="8"/><rect x="1645" y="0" width="1" height="8"/><rect x="1645" y="40" width="1" height="8"/><rect x="1682" y="0" width="1" height="8"/><rect x="1682" y="40" width="1" height="8"/><rect x="1720" y="0" width="1" height="8"/><rect x="1720" y="40" width="1" height="8"/><rect x="1757" y="0" width="1" height="8"/><rect x="1757" y="40" width="1" height="8"/><rect x="1794" y="0" width="1" height="8"/><rect x="1794" y="40" width="1" height="8"/><rect x="1831" y="0" width="1" height="8"/><rect x="1831" y="40" width="1" height="8"/><rect x="1869" y="0" width="1" height="8"/><rect x="1869" y="40" width="1" height="8"/><rect x="1906" y="0" width="1" height="8"/><rect x="1906" y="40" width="1" height="8"/><rect x="1943" y="0" width="1" height="8"/><rect x="1943" y="40" width="1" height="8"/><rect x="1981" y="0" width="1" height="8"/><rect x="1981" y="40" width="1" height="8"/><rect x="2018" y="0" width="1" height="8"/><rect x="2018" y="40" width="1" height="8"/><rect x="2055" y="0" width="1" height="8"/><rect x="2055" y="40" width="1" height="8"/><rect x="2092" y="0" width="1" height="8"/><rect x="2092" y="40" width="1" height="8"/><rect x="2130" y="0" width="1" height="8"/><rect x="2130" y="40" width="1" height="8"/><rect x="2167" y="0" width="1" height="8"/><rect x="2167" y="40" width="1" height="8"/><rect x="2204" y="0" width="1" height="8"/><rect x="2204" y="40" width="1" height="8"/><rect x="2241" y="0" width="1" height="8"/><rect x="2241" y="40" width="1" height="8"/></g><g fill="#b0b0b0"><rect x="43" y="24" width="1" height="15"/><rect x="80" y="24" width="1" height="15"/><rect x="117" y="24" width="1" height="15"/><rect x="154" y="24" width="1" height="15"/><rect x="192" y="24" width="1" height="15"/><rect x="229" y="24" width="1" height="15"/><rect x="266" y="24" width="1" height="15"/><rect x="303" y="24" width="1" height="15"/><rect x="341" y="24" width="1" height="15"/><rect x="378" y="24" width="1" height="15"/><rect x="415" y="24" width="1" height="15"/><rect x="452" y="24" width="1" height="15"/><rect x="490" y="24" width="1" height="15"/><rect x="527" y="24" width="1" height="15"/><rect x="564" y="24" width="1" height="15"/><rect x="602" y="24" width="1" height="15"/><rect x="639" y="24" width="1" height="15"/><rect x="676" y="24" width="1" height="15"/><rect x="713" y="24" width="1" height="15"/><rect x="751" y="24" width="1" height="15"/><rect x="788" y="24" width="1" height="15"/><rect x="825" y="24" width="1" height="15"/><rect x="862" y="24" width="1" height="15"/><rect x="900" y="24" width="1" height="15"/><rect x="937" y="24" width="1" height="15"/><rect x="974" y="24" width="1" height="15"/><rect x="1012" y="24" width="1" height="15"/><rect x="1049" y="24" width="1" height="15"/><rect x="1086" y="24" width="1" height="15"/><rect x="1123" y="24" width="1" height="15"/><rect x="1161" y="24" width="1" height="15"/><rect x="1198" y="24" width="1" height="15"/><rect x="1235" y="24" width="1" height="15"/><rect x="1272" y="24" width="1" height="15"/><rect x="1310" y="24" width="1" height="15"/><rect x="1347" y="24" width="1" height="15"/><rect x="1384" y="24" width="1" height="15"/><rect x="1421" y="24" width="1" height="15"/><rect x="1459" y="24" width="1" height="15"/><rect x="1496" y="24" width="1" height="15"/><rect x="1533" y="24" width="1" height="15"/><rect x="1571" y="24" width="1" height="15"/><rect x="1608" y="24" width="1" height="15"/><rect x="1645" y="24" width="1" height="15"/><rect x="1682" y="24" width="1" height="15"/><rect x="1720" y="24" width="1" height="15"/><rect x="1757" y="24" width="1" height="15"/><rect x="1794" y="24" width="1" height="15"/><rect x="1831" y="24" width="1" height="15"/><rect x="1869" y="24" width="1" height="15"/><rect x="1906" y="24" width="1" height="15"/><rect x="1943" y="24" width="1" height="15"/><rect x="1981" y="24" width="1" height="15"/><rect x="2018" y="24" width="1" height="15"/><rect x="2055" y="24" width="1" height="15"/><rect x="2092" y="24" width="1" height="15"/><rect x="2130" y="24" width="1" height="15"/><rect x="2167" y="24" width="1" height="15"/><rect x="2204" y="24" width="1" height="15"/><rect x="2241" y="24" width="1" height="15"/></g></svg>
<div class="t" style="left:50.50px;top:1325.57px;font-size:11.5px;line-height:11.5px;color:#a8a8a8;">2</div>
<div class="t" style="left:87.50px;top:1325.57px;font-size:11.5px;line-height:11.5px;color:#a8a8a8;">4</div>
<div class="t" style="left:124.50px;top:1325.57px;font-size:11.5px;line-height:11.5px;color:#a8a8a8;">6</div>
<div class="t" style="left:161.50px;top:1325.57px;font-size:11.5px;line-height:11.5px;color:#a8a8a8;">8</div>
<div class="t" style="left:199.50px;top:1325.57px;font-size:11.5px;line-height:11.5px;color:#a8a8a8;">10</div>
<div class="t" style="left:236.50px;top:1325.57px;font-size:11.5px;line-height:11.5px;color:#a8a8a8;">12</div>
<div class="t" style="left:273.50px;top:1325.57px;font-size:11.5px;line-height:11.5px;color:#a8a8a8;">14</div>
<div class="t" style="left:310.50px;top:1325.57px;font-size:11.5px;line-height:11.5px;color:#a8a8a8;">16</div>
<div class="t" style="left:348.50px;top:1325.57px;font-size:11.5px;line-height:11.5px;color:#a8a8a8;">18</div>
<div class="t" style="left:385.50px;top:1325.57px;font-size:11.5px;line-height:11.5px;color:#a8a8a8;">20</div>
<div class="t" style="left:422.50px;top:1325.57px;font-size:11.5px;line-height:11.5px;color:#a8a8a8;">22</div>
<div class="t" style="left:459.50px;top:1325.57px;font-size:11.5px;line-height:11.5px;color:#a8a8a8;">24</div>
<div class="t" style="left:497.50px;top:1325.57px;font-size:11.5px;line-height:11.5px;color:#a8a8a8;">26</div>
<div class="t" style="left:534.50px;top:1325.57px;font-size:11.5px;line-height:11.5px;color:#a8a8a8;">28</div>
<div class="t" style="left:571.50px;top:1325.57px;font-size:11.5px;line-height:11.5px;color:#a8a8a8;">30</div>
<div class="t" style="left:609.50px;top:1325.57px;font-size:11.5px;line-height:11.5px;color:#a8a8a8;">32</div>
<div class="t" style="left:646.50px;top:1325.57px;font-size:11.5px;line-height:11.5px;color:#a8a8a8;">34</div>
<div class="t" style="left:683.50px;top:1325.57px;font-size:11.5px;line-height:11.5px;color:#a8a8a8;">36</div>
<div class="t" style="left:720.50px;top:1325.57px;font-size:11.5px;line-height:11.5px;color:#a8a8a8;">38</div>
<div class="t" style="left:758.50px;top:1325.57px;font-size:11.5px;line-height:11.5px;color:#a8a8a8;">40</div>
<div class="t" style="left:795.50px;top:1325.57px;font-size:11.5px;line-height:11.5px;color:#a8a8a8;">42</div>
<div class="t" style="left:832.50px;top:1325.57px;font-size:11.5px;line-height:11.5px;color:#a8a8a8;">44</div>
<div class="t" style="left:869.50px;top:1325.57px;font-size:11.5px;line-height:11.5px;color:#a8a8a8;">46</div>
<div class="t" style="left:907.50px;top:1325.57px;font-size:11.5px;line-height:11.5px;color:#a8a8a8;">48</div>
<div class="t" style="left:944.50px;top:1325.57px;font-size:11.5px;line-height:11.5px;color:#a8a8a8;">50</div>
<div class="t" style="left:981.50px;top:1325.57px;font-size:11.5px;line-height:11.5px;color:#a8a8a8;">52</div>
<div class="t" style="left:1019.50px;top:1325.57px;font-size:11.5px;line-height:11.5px;color:#a8a8a8;">54</div>
<div class="t" style="left:1056.50px;top:1325.57px;font-size:11.5px;line-height:11.5px;color:#a8a8a8;">56</div>
<div class="t" style="left:1093.50px;top:1325.57px;font-size:11.5px;line-height:11.5px;color:#a8a8a8;">58</div>
<div class="t" style="left:1130.50px;top:1325.57px;font-size:11.5px;line-height:11.5px;color:#a8a8a8;">60</div>
<div class="t" style="left:1168.50px;top:1325.57px;font-size:11.5px;line-height:11.5px;color:#a8a8a8;">62</div>
<div class="t" style="left:1205.50px;top:1325.57px;font-size:11.5px;line-height:11.5px;color:#a8a8a8;">64</div>
<div class="t" style="left:1242.50px;top:1325.57px;font-size:11.5px;line-height:11.5px;color:#a8a8a8;">66</div>
<div class="t" style="left:1279.50px;top:1325.57px;font-size:11.5px;line-height:11.5px;color:#a8a8a8;">68</div>
<div class="t" style="left:1317.50px;top:1325.57px;font-size:11.5px;line-height:11.5px;color:#a8a8a8;">70</div>
<div class="t" style="left:1354.50px;top:1325.57px;font-size:11.5px;line-height:11.5px;color:#a8a8a8;">72</div>
<div class="t" style="left:1391.50px;top:1325.57px;font-size:11.5px;line-height:11.5px;color:#a8a8a8;">74</div>
<div class="t" style="left:1428.50px;top:1325.57px;font-size:11.5px;line-height:11.5px;color:#a8a8a8;">76</div>
<div class="t" style="left:1466.50px;top:1325.57px;font-size:11.5px;line-height:11.5px;color:#a8a8a8;">78</div>
<div class="t" style="left:1503.50px;top:1325.57px;font-size:11.5px;line-height:11.5px;color:#a8a8a8;">80</div>
<div class="t" style="left:1540.50px;top:1325.57px;font-size:11.5px;line-height:11.5px;color:#a8a8a8;">82</div>
<div class="t" style="left:1578.50px;top:1325.57px;font-size:11.5px;line-height:11.5px;color:#a8a8a8;">84</div>
<div class="t" style="left:1615.50px;top:1325.57px;font-size:11.5px;line-height:11.5px;color:#a8a8a8;">86</div>
<div class="t" style="left:1652.50px;top:1325.57px;font-size:11.5px;line-height:11.5px;color:#a8a8a8;">88</div>
<div class="t" style="left:1689.50px;top:1325.57px;font-size:11.5px;line-height:11.5px;color:#a8a8a8;">90</div>
<div class="t" style="left:1727.50px;top:1325.57px;font-size:11.5px;line-height:11.5px;color:#a8a8a8;">92</div>
<div class="t" style="left:1764.50px;top:1325.57px;font-size:11.5px;line-height:11.5px;color:#a8a8a8;">94</div>
<div class="t" style="left:1801.50px;top:1325.57px;font-size:11.5px;line-height:11.5px;color:#a8a8a8;">96</div>
<div class="t" style="left:1838.50px;top:1325.57px;font-size:11.5px;line-height:11.5px;color:#a8a8a8;">98</div>
<div class="t" style="left:1876.50px;top:1325.57px;font-size:11.5px;line-height:11.5px;color:#a8a8a8;">100</div>
<div class="t" style="left:1913.50px;top:1325.57px;font-size:11.5px;line-height:11.5px;color:#a8a8a8;">102</div>
<div class="t" style="left:1950.50px;top:1325.57px;font-size:11.5px;line-height:11.5px;color:#a8a8a8;">104</div>
<div class="t" style="left:1988.50px;top:1325.57px;font-size:11.5px;line-height:11.5px;color:#a8a8a8;">106</div>
<div class="t" style="left:2025.50px;top:1325.57px;font-size:11.5px;line-height:11.5px;color:#a8a8a8;">108</div>
<div class="t" style="left:2062.50px;top:1325.57px;font-size:11.5px;line-height:11.5px;color:#a8a8a8;">110</div>
<div class="t" style="left:2099.50px;top:1325.57px;font-size:11.5px;line-height:11.5px;color:#a8a8a8;">112</div>
<div class="t" style="left:2137.50px;top:1325.57px;font-size:11.5px;line-height:11.5px;color:#a8a8a8;">114</div>
<div class="t" style="left:2174.50px;top:1325.57px;font-size:11.5px;line-height:11.5px;color:#a8a8a8;">116</div>
<div class="t" style="left:2211.50px;top:1325.57px;font-size:11.5px;line-height:11.5px;color:#a8a8a8;">118</div>
<div class="t" style="left:2248.50px;top:1325.57px;font-size:11.5px;line-height:11.5px;color:#a8a8a8;">120</div>
<div style="left:29px;top:1342px;width:9px;height:11.5px;background:#2b2b2b;border-radius:2px;"></div>
<div class="t" style="left:31.50px;top:1341.57px;font-size:11.5px;line-height:11.5px;color:#ffffff;">1</div>
<div style="left:2278px;top:1330px;width:50px;height:20px;background:#2b2b2b;border-radius:3px;"></div>
<div class="t" style="left:2284.00px;top:1335.99px;font-size:11px;line-height:11px;color:#d8d8d8;">1</div>
<svg style="left:2338px;top:1333px;" width="18" height="14" viewBox="0 0 18 14"><rect x="1" y="1" width="1.800" height="12" fill="#c8c8c8"/><path d="M9.500 1v12L3.500 7zM16 1v12L10 7z" fill="#c8c8c8"/></svg>
<svg style="left:2367px;top:1333px;" width="18" height="14" viewBox="0 0 18 14"><rect x="1.500" y="1" width="2" height="12" fill="#c8c8c8"/><path d="M13.500 1v12L4.500 7z" fill="#c8c8c8"/></svg>
<svg style="left:2394px;top:1333px;" width="18" height="14" viewBox="0 0 18 14"><rect x="1.500" y="0" width="2.600" height="14" fill="#e8834a"/><path d="M14.500 1v12L5.500 7z" fill="#c8c8c8"/></svg>
<svg style="left:2422px;top:1333px;" width="18" height="14" viewBox="0 0 18 14"><path d="M14 .5v13L2 7z" fill="#c8c8c8"/></svg>
<svg style="left:2451px;top:1333px;" width="18" height="14" viewBox="0 0 18 14"><path d="M2 .5v13L14.500 7z" fill="#c8c8c8"/></svg>
<svg style="left:2479px;top:1333px;" width="18" height="14" viewBox="0 0 18 14"><rect x="12.500" y="0" width="2.600" height="14" fill="#e8834a"/><path d="M2 1v12L11 7z" fill="#c8c8c8"/></svg>
<svg style="left:2507px;top:1333px;" width="18" height="14" viewBox="0 0 18 14"><rect x="12" y="1" width="2" height="12" fill="#c8c8c8"/><path d="M2 1v12L11 7z" fill="#c8c8c8"/></svg>
<svg style="left:2534px;top:1333px;" width="18" height="14" viewBox="0 0 18 14"><rect x="15" y="1" width="1.800" height="12" fill="#c8c8c8"/><path d="M1.500 1v12L7.500 7zM8 1v12L14 7z" fill="#c8c8c8"/></svg>
<div style="left:0px;top:1364.5px;width:2560px;height:2px;background:#3a3a3a;"></div>
<svg style="left:3px;top:1370px;" width="5" height="28" viewBox="0 0 5 28"><rect x="0" y="0" width="1" height="1" fill="#777"/><rect x="3" y="0" width="1" height="1" fill="#777"/><rect x="0" y="3" width="1" height="1" fill="#777"/><rect x="3" y="3" width="1" height="1" fill="#777"/><rect x="0" y="6" width="1" height="1" fill="#777"/><rect x="3" y="6" width="1" height="1" fill="#777"/><rect x="0" y="9" width="1" height="1" fill="#777"/><rect x="3" y="9" width="1" height="1" fill="#777"/><rect x="0" y="12" width="1" height="1" fill="#777"/><rect x="3" y="12" width="1" height="1" fill="#777"/><rect x="0" y="15" width="1" height="1" fill="#777"/><rect x="3" y="15" width="1" height="1" fill="#777"/><rect x="0" y="18" width="1" height="1" fill="#777"/><rect x="3" y="18" width="1" height="1" fill="#777"/><rect x="0" y="21" width="1" height="1" fill="#777"/><rect x="3" y="21" width="1" height="1" fill="#777"/><rect x="0" y="24" width="1" height="1" fill="#777"/><rect x="3" y="24" width="1" height="1" fill="#777"/><rect x="0" y="27" width="1" height="1" fill="#777"/><rect x="3" y="27" width="1" height="1" fill="#777"/></svg>
<div style="left:17px;top:1374px;width:50px;height:20px;background:#2b2b2b;border-radius:3px;"></div>
<div class="t" style="left:22.50px;top:1379.99px;font-size:11px;line-height:11px;color:#d8d8d8;">1</div>
<div style="left:76px;top:1374.5px;width:1730px;height:19px;background:#2b2b2b;border-radius:2px;"></div>
<div style="left:77px;top:1375.5px;width:1041px;height:17px;background:#464646;"></div>
<div style="left:78px;top:1376px;width:8px;height:16px;background:#a4a4a4;border-radius:1px;"></div>
<div class="t" style="left:95.00px;top:1379.99px;font-size:11px;line-height:11px;color:#d0d0d0;">1</div>
<div class="t" style="left:1088.00px;top:1379.99px;font-size:11px;line-height:11px;color:#d0d0d0;transform:scaleX(0.9808);transform-origin:0 0;">120</div>
<div style="left:1114px;top:1376px;width:8px;height:16px;background:#a4a4a4;border-radius:1px;"></div>
<svg style="left:600px;top:1379px;" width="3" height="10" viewBox="0 0 3 10"><rect x="0" y="0" width="1" height="1" fill="#999"/><rect x="2" y="0" width="1" height="1" fill="#999"/><rect x="0" y="3" width="1" height="1" fill="#999"/><rect x="2" y="3" width="1" height="1" fill="#999"/><rect x="0" y="6" width="1" height="1" fill="#999"/><rect x="2" y="6" width="1" height="1" fill="#999"/><rect x="0" y="9" width="1" height="1" fill="#999"/><rect x="2" y="9" width="1" height="1" fill="#999"/></svg>
<div style="left:1815px;top:1374px;width:50px;height:20px;background:#2b2b2b;border-radius:3px;"></div>
<div class="t" style="left:1820.00px;top:1379.99px;font-size:11px;line-height:11px;color:#d8d8d8;transform:scaleX(0.9808);transform-origin:0 0;">200</div>
<div style="left:1886px;top:1374px;width:1px;height:20px;background:#6e6e6e;"></div>
<div style="left:1885px;top:1379px;width:3px;height:10px;background:#777;border-radius:1px;"></div>
<div style="left:1950px;top:1374px;width:1px;height:20px;background:#6e6e6e;"></div>
<div style="left:1949px;top:1379px;width:3px;height:10px;background:#777;border-radius:1px;"></div>
<div style="left:2247px;top:1374px;width:1px;height:20px;background:#6e6e6e;"></div>
<div style="left:2246px;top:1379px;width:3px;height:10px;background:#777;border-radius:1px;"></div>
<div style="left:2453px;top:1374px;width:1px;height:20px;background:#6e6e6e;"></div>
<div style="left:2452px;top:1379px;width:3px;height:10px;background:#777;border-radius:1px;"></div>
<svg style="left:1911px;top:1374px;" width="18" height="19" viewBox="0 0 18 19"><path d="M2.500 5.500h9V18l-4.500-3.500L2.500 18z" fill="#e8834a"/><path d="M9.500 4h7M13 .5v7" stroke="#e8e8e8" stroke-width="1.600"/></svg>
<svg style="left:1975px;top:1379px;" width="11" height="8" viewBox="0 0 11 8"><path d="M1 1h9L5.500 6.500z" fill="none" stroke="#9a9a9a" stroke-width="1"/></svg>
<div style="left:1992px;top:1374px;width:102px;height:20px;background:#444;border:1px solid #383838;border-radius:3px;"></div>
<div class="t" style="left:1998.30px;top:1379.99px;font-size:11px;line-height:11px;color:#bebebe;transform:scaleX(1.0061);transform-origin:0 0;">No Character Set</div>
<svg style="left:2107px;top:1379px;" width="11" height="8" viewBox="0 0 11 8"><path d="M1 1h9L5.500 6.500z" fill="none" stroke="#9a9a9a" stroke-width="1"/></svg>
<div style="left:2124px;top:1374px;width:102px;height:20px;background:#444;border:1px solid #383838;border-radius:3px;"></div>
<div class="t" style="left:2130.50px;top:1379.99px;font-size:11px;line-height:11px;color:#bebebe;transform:scaleX(1.0049);transform-origin:0 0;">No Anim Layer</div>
<div style="left:2271px;top:1374px;width:95px;height:20px;background:#5b5b5b;border-radius:2px;"></div>
<div style="left:2345px;top:1374px;width:1px;height:20px;background:#484848;"></div>
<div class="t" style="left:2274.30px;top:1379.99px;font-size:11px;line-height:11px;color:#bebebe;transform:scaleX(1.0012);transform-origin:0 0;">24 fps</div>
<svg style="left:2350px;top:1380px;" width="12" height="8" viewBox="0 0 12 8"><path d="M1 1h10L6 7z" fill="#d8d8d8"/></svg>
<svg style="left:2380px;top:1374px;" width="20" height="20" viewBox="0 0 20 20"><path d="M4 10V8.500a3 3 0 0 1 3-3h8M16 10v1.500a3 3 0 0 1-3 3H5" fill="none" stroke="#d0d0d0" stroke-width="1.800"/><path d="M13.500 2l4 3.500-4 3.500zM6.500 11l-4 3.500 4 3.500z" fill="#d0d0d0"/></svg>
<div style="left:2409.5px;top:1372px;width:23.5px;height:23px;background:#5285a6;"></div>
<svg style="left:2411px;top:1373px;" width="21" height="21" viewBox="0 0 21 21"><rect x="2" y="5.500" width="16" height="12" fill="none" stroke="#e8834a" stroke-width="1.600"/><path d="M2 8.500h16M5.500 5.500v3M9 5.500v3M12.500 5.500v3" stroke="#e8834a" stroke-width="1.200"/><rect x="4" y="11" width="3.500" height="4" fill="#e8834a"/><rect x="8.500" y="11" width="3.500" height="4" fill="#e8834a"/><rect x="13" y="11" width="3.500" height="4" fill="#e8834a"/><path d="M13.500 1l5.500 5-5.500 3z" fill="#e0e0e0" stroke="#444" stroke-width=".6"/></svg>
<svg style="left:2476px;top:1374px;" width="21" height="20" viewBox="0 0 21 20"><path d="M1.500 7.500h4L11 3v14l-5.500-4.500h-4z" fill="#d0d0d0"/><path d="M13.500 7a4 4 0 0 1 0 6M16 4.500a7.500 7.500 0 0 1 0 11" fill="none" stroke="#d0d0d0" stroke-width="1.300"/></svg>
<svg style="left:2505px;top:1374px;" width="20" height="20" viewBox="0 0 20 20"><circle cx="10" cy="10.500" r="7" fill="none" stroke="#b0b0b0" stroke-width="1.600" stroke-dasharray="9 3"/><path d="M10 6v5" stroke="#e8834a" stroke-width="1.800"/><path d="M6 13.500h8" stroke="#e8834a" stroke-width="1.300"/></svg>
<svg style="left:2533px;top:1372px;" width="21" height="23" viewBox="0 0 21 23"><circle cx="5" cy="5" r="3" fill="none" stroke="#b0b0b0" stroke-width="1.600"/><path d="M5 0v2M5 8v2M0 5h2M8 5h2" stroke="#b0b0b0" stroke-width="1.300"/><circle cx="14.500" cy="8" r="2" fill="#e8834a"/><path d="M9 12l4-1.500 3 1 2.500 3M13 11l-1 5 3 2.500-.5 4M12 16l-2 3-3 .5" fill="none" stroke="#e8834a" stroke-width="1.800"/></svg>
<div style="left:0px;top:1400px;width:2560px;height:3px;background:#3a3a3a;"></div>
<svg style="left:3px;top:1408px;" width="5" height="30" viewBox="0 0 5 30"><rect x="0" y="0" width="1" height="1" fill="#777"/><rect x="3" y="0" width="1" height="1" fill="#777"/><rect x="0" y="3" width="1" height="1" fill="#777"/><rect x="3" y="3" width="1" height="1" fill="#777"/><rect x="0" y="6" width="1" height="1" fill="#777"/><rect x="3" y="6" width="1" height="1" fill="#777"/><rect x="0" y="9" width="1" height="1" fill="#777"/><rect x="3" y="9" width="1" height="1" fill="#777"/><rect x="0" y="12" width="1" height="1" fill="#777"/><rect x="3" y="12" width="1" height="1" fill="#777"/><rect x="0" y="15" width="1" height="1" fill="#777"/><rect x="3" y="15" width="1" height="1" fill="#777"/><rect x="0" y="18" width="1" height="1" fill="#777"/><rect x="3" y="18" width="1" height="1" fill="#777"/><rect x="0" y="21" width="1" height="1" fill="#777"/><rect x="3" y="21" width="1" height="1" fill="#777"/><rect x="0" y="24" width="1" height="1" fill="#777"/><rect x="3" y="24" width="1" height="1" fill="#777"/><rect x="0" y="27" width="1" height="1" fill="#777"/><rect x="3" y="27" width="1" height="1" fill="#777"/></svg>
<svg style="left:15px;top:1413px;" width="18" height="18" viewBox="0 0 18 18"><circle cx="9" cy="9" r="8.300" fill="#7cb83c"/><path d="M5.800 7a3.300 3.300 0 1 1 4.800 2.700c-1 .6-1.500 1-1.500 2.300" fill="none" stroke="#3c3c3c" stroke-width="2"/><rect x="8" y="13" width="2.200" height="2.200" fill="#3c3c3c"/></svg>
<div class="t" style="left:40.50px;top:1417.84px;font-size:10px;line-height:10px;color:#d4d4d4;transform:scaleX(0.9909);transform-origin:0 0;">Enter text to limit the listing (e.g., P* to show all objects beginning with P)</div>
<div style="left:1087px;top:1403px;width:2px;height:37px;background:#3a3a3a;"></div>
<svg style="left:1092px;top:1408px;" width="5" height="30" viewBox="0 0 5 30"><rect x="0" y="0" width="1" height="1" fill="#777"/><rect x="3" y="0" width="1" height="1" fill="#777"/><rect x="0" y="3" width="1" height="1" fill="#777"/><rect x="3" y="3" width="1" height="1" fill="#777"/><rect x="0" y="6" width="1" height="1" fill="#777"/><rect x="3" y="6" width="1" height="1" fill="#777"/><rect x="0" y="9" width="1" height="1" fill="#777"/><rect x="3" y="9" width="1" height="1" fill="#777"/><rect x="0" y="12" width="1" height="1" fill="#777"/><rect x="3" y="12" width="1" height="1" fill="#777"/><rect x="0" y="15" width="1" height="1" fill="#777"/><rect x="3" y="15" width="1" height="1" fill="#777"/><rect x="0" y="18" width="1" height="1" fill="#777"/><rect x="3" y="18" width="1" height="1" fill="#777"/><rect x="0" y="21" width="1" height="1" fill="#777"/><rect x="3" y="21" width="1" height="1" fill="#777"/><rect x="0" y="24" width="1" height="1" fill="#777"/><rect x="3" y="24" width="1" height="1" fill="#777"/><rect x="0" y="27" width="1" height="1" fill="#777"/><rect x="3" y="27" width="1" height="1" fill="#777"/></svg>
<div class="t" style="left:1104.40px;top:1417.84px;font-size:10px;line-height:10px;color:#d4d4d4;transform:scaleX(0.9970);transform-origin:0 0;">MEL</div>
<div style="left:1133px;top:1412px;width:541px;height:20px;background:#2b2b2b;border-radius:3px;"></div>
<svg style="left:1676px;top:1416px;" width="3" height="12" viewBox="0 0 3 12"><rect x="0" y="0" width="1" height="1" fill="#888"/><rect x="0" y="3" width="1" height="1" fill="#888"/><rect x="0" y="6" width="1" height="1" fill="#888"/><rect x="0" y="9" width="1" height="1" fill="#888"/></svg>
<div style="left:1680px;top:1412px;width:843px;height:20px;background:#2b2b2b;border-radius:3px;"></div>
<svg style="left:2533px;top:1412px;" width="19" height="20" viewBox="0 0 19 20"><rect x=".5" y="4.500" width="18" height="14.500" fill="#c4c4c4"/><path d="M1 1h17" stroke="#c4c4c4" stroke-width="1.200" stroke-dasharray="1.500 1"/><rect x=".5" y="2.500" width="18" height="1" fill="#c4c4c4"/><text x="9.500" y="15.500" font-size="10" font-weight="bold" text-anchor="middle" fill="#3a3a3a" font-family="Liberation Mono">{;}</text></svg></body></html>
